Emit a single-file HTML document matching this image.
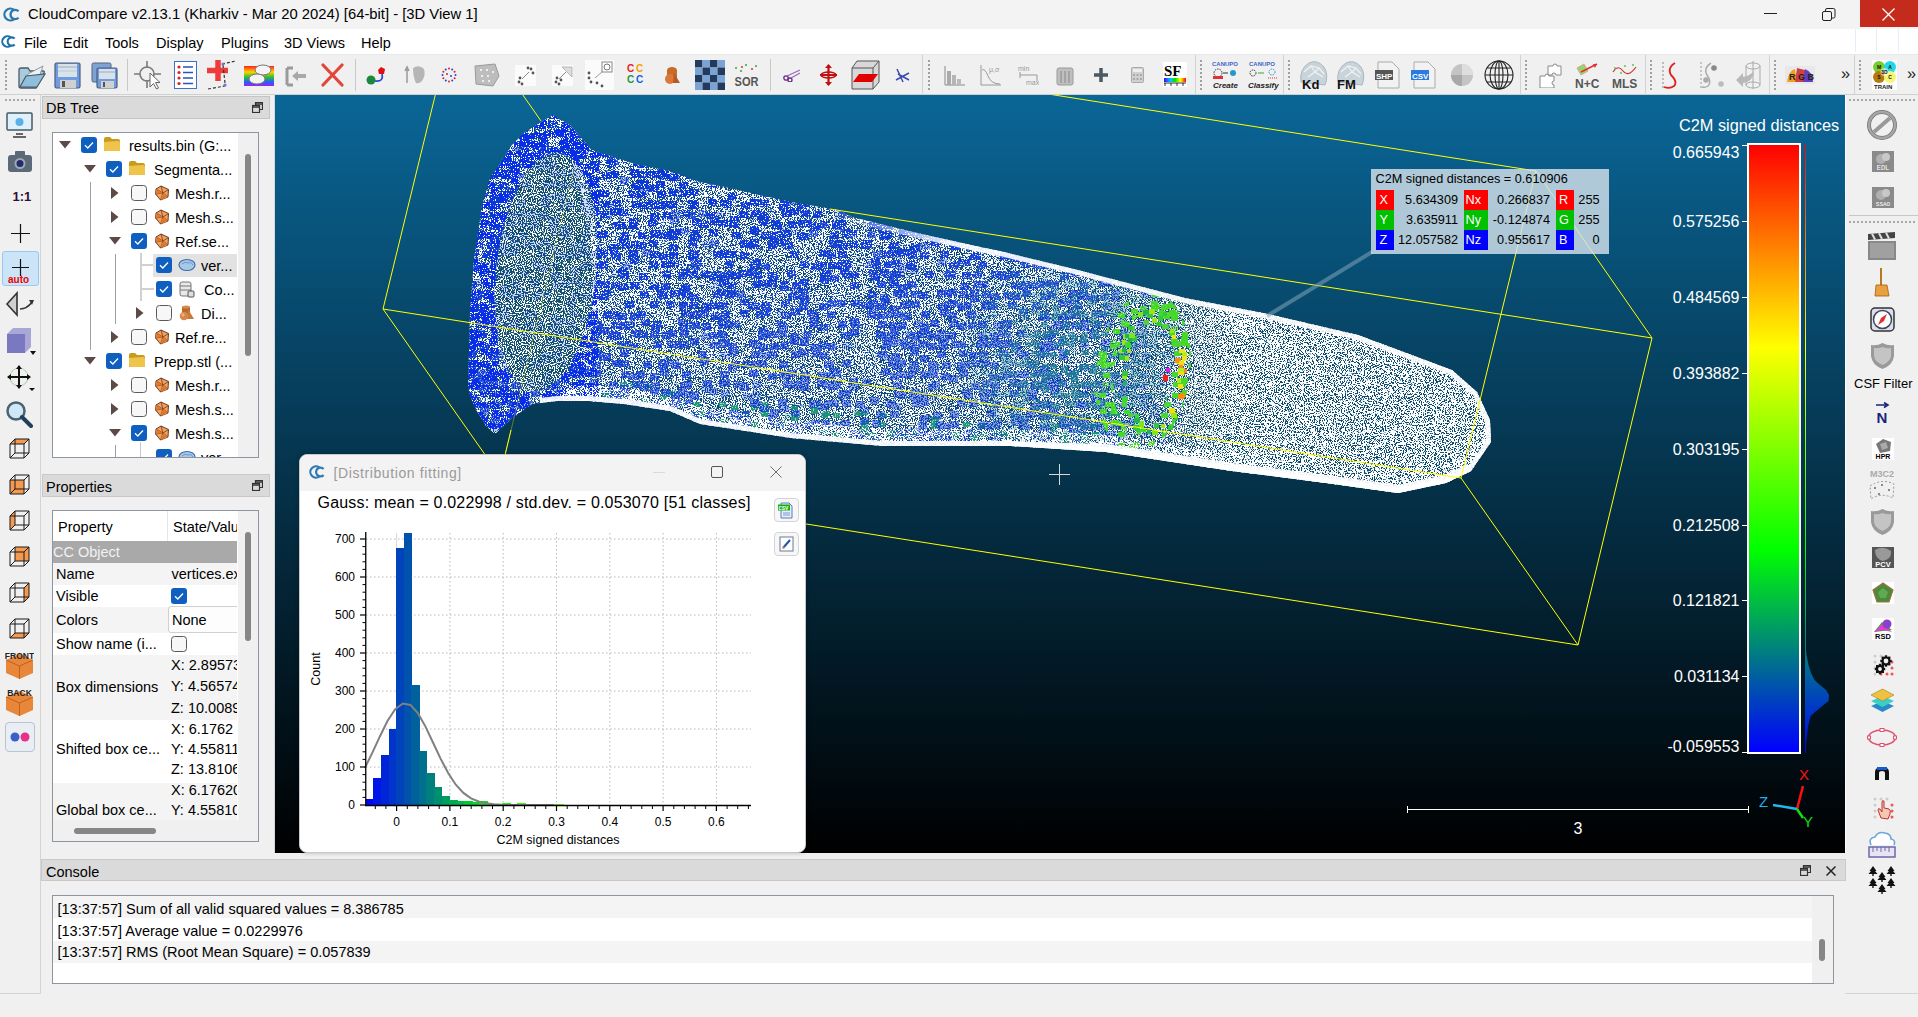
<!DOCTYPE html>
<html><head><meta charset="utf-8"><title>CloudCompare</title><style>*{box-sizing:border-box}
html,body{margin:0;padding:0}
body{width:1918px;height:1017px;overflow:hidden;position:relative;background:#f0f0f0;font-family:"Liberation Sans",sans-serif;color:#000}
.a{position:absolute;display:block}
.t{position:absolute;white-space:nowrap}
</style></head><body>
<div class="a" style="left:0px;top:0px;width:1918px;height:29px;background:#f3f3f3;"></div>
<svg class="a" style="left:3px;top:6px;" width="17" height="17" viewBox="0 0 16 16"><g fill="none" stroke="#2a78b0" stroke-width="2.2"><path d="M10.4 3.6 A5.6 5.6 0 1 0 10.4 12.4"/><path d="M14.6 4.9 A4.4 4.4 0 1 0 14.6 11.1"/></g></svg>
<div class="t" style="left:28px;top:6.36px;font-size:14.8px;line-height:17.02px;color:#000;">CloudCompare v2.13.1 (Kharkiv - Mar 20 2024) [64-bit] - [3D View 1]</div>
<div class="a" style="left:1764px;top:13px;width:13px;height:1px;background:#222;"></div>
<svg class="a" style="left:1822px;top:8px;" width="14" height="13" viewBox="0 0 14 13"><rect x="0.5" y="3.5" width="9" height="9" rx="1.5" fill="none" stroke="#222"/><path d="M3.5 3.5 V2 a1.5 1.5 0 0 1 1.5 -1.5 H11.5 a1.5 1.5 0 0 1 1.5 1.5 V8.5 a1.5 1.5 0 0 1 -1.5 1.5 H10" fill="none" stroke="#222"/></svg>
<div class="a" style="left:1860px;top:0px;width:58px;height:27px;background:#c42b1c;"></div>
<svg class="a" style="left:1882px;top:8px;" width="13" height="13" viewBox="0 0 13 13"><path d="M0.5 0.5 L12.5 12.5 M12.5 0.5 L0.5 12.5" stroke="#fff" stroke-width="1.3"/></svg>
<div class="a" style="left:0px;top:29px;width:1918px;height:25px;background:#ffffff;"></div>
<div class="a" style="left:1855px;top:29px;width:1px;height:23px;background:#e3eef8;"></div>
<div class="a" style="left:1876px;top:29px;width:1px;height:23px;background:#e3eef8;"></div>
<div class="a" style="left:1898px;top:29px;width:1px;height:23px;background:#e3eef8;"></div>
<svg class="a" style="left:1px;top:34px;" width="15" height="15" viewBox="0 0 16 16"><g fill="none" stroke="#1f6fa8" stroke-width="2.2"><path d="M10.4 3.6 A5.6 5.6 0 1 0 10.4 12.4"/><path d="M14.6 4.9 A4.4 4.4 0 1 0 14.6 11.1"/></g></svg>
<div class="t" style="left:24px;top:34.64px;font-size:14.5px;line-height:16.67px;color:#000;">File</div>
<div class="t" style="left:63px;top:34.64px;font-size:14.5px;line-height:16.67px;color:#000;">Edit</div>
<div class="t" style="left:105px;top:34.64px;font-size:14.5px;line-height:16.67px;color:#000;">Tools</div>
<div class="t" style="left:156px;top:34.64px;font-size:14.5px;line-height:16.67px;color:#000;">Display</div>
<div class="t" style="left:221px;top:34.64px;font-size:14.5px;line-height:16.67px;color:#000;">Plugins</div>
<div class="t" style="left:284px;top:34.64px;font-size:14.5px;line-height:16.67px;color:#000;">3D Views</div>
<div class="t" style="left:361px;top:34.64px;font-size:14.5px;line-height:16.67px;color:#000;">Help</div>
<div class="a" style="left:0px;top:54px;width:1918px;height:1px;background:#e8e8e8;"></div>
<div class="a" style="left:0px;top:55px;width:1918px;height:39px;background:#f0f0f0;"></div>
<div class="a" style="left:0px;top:94px;width:1918px;height:1px;background:#d0d0d0;"></div>
<div class="a" style="left:5px;top:60px;width:2px;height:2px;background:#a0a0a0;"></div>
<div class="a" style="left:5px;top:64px;width:2px;height:2px;background:#a0a0a0;"></div>
<div class="a" style="left:5px;top:68px;width:2px;height:2px;background:#a0a0a0;"></div>
<div class="a" style="left:5px;top:72px;width:2px;height:2px;background:#a0a0a0;"></div>
<div class="a" style="left:5px;top:76px;width:2px;height:2px;background:#a0a0a0;"></div>
<div class="a" style="left:5px;top:80px;width:2px;height:2px;background:#a0a0a0;"></div>
<div class="a" style="left:5px;top:84px;width:2px;height:2px;background:#a0a0a0;"></div>
<div class="a" style="left:5px;top:88px;width:2px;height:2px;background:#a0a0a0;"></div>
<div class="a" style="left:928px;top:60px;width:2px;height:2px;background:#a0a0a0;"></div>
<div class="a" style="left:928px;top:64px;width:2px;height:2px;background:#a0a0a0;"></div>
<div class="a" style="left:928px;top:68px;width:2px;height:2px;background:#a0a0a0;"></div>
<div class="a" style="left:928px;top:72px;width:2px;height:2px;background:#a0a0a0;"></div>
<div class="a" style="left:928px;top:76px;width:2px;height:2px;background:#a0a0a0;"></div>
<div class="a" style="left:928px;top:80px;width:2px;height:2px;background:#a0a0a0;"></div>
<div class="a" style="left:928px;top:84px;width:2px;height:2px;background:#a0a0a0;"></div>
<div class="a" style="left:928px;top:88px;width:2px;height:2px;background:#a0a0a0;"></div>
<div class="a" style="left:1200px;top:60px;width:2px;height:2px;background:#a0a0a0;"></div>
<div class="a" style="left:1200px;top:64px;width:2px;height:2px;background:#a0a0a0;"></div>
<div class="a" style="left:1200px;top:68px;width:2px;height:2px;background:#a0a0a0;"></div>
<div class="a" style="left:1200px;top:72px;width:2px;height:2px;background:#a0a0a0;"></div>
<div class="a" style="left:1200px;top:76px;width:2px;height:2px;background:#a0a0a0;"></div>
<div class="a" style="left:1200px;top:80px;width:2px;height:2px;background:#a0a0a0;"></div>
<div class="a" style="left:1200px;top:84px;width:2px;height:2px;background:#a0a0a0;"></div>
<div class="a" style="left:1200px;top:88px;width:2px;height:2px;background:#a0a0a0;"></div>
<div class="a" style="left:1288px;top:60px;width:2px;height:2px;background:#a0a0a0;"></div>
<div class="a" style="left:1288px;top:64px;width:2px;height:2px;background:#a0a0a0;"></div>
<div class="a" style="left:1288px;top:68px;width:2px;height:2px;background:#a0a0a0;"></div>
<div class="a" style="left:1288px;top:72px;width:2px;height:2px;background:#a0a0a0;"></div>
<div class="a" style="left:1288px;top:76px;width:2px;height:2px;background:#a0a0a0;"></div>
<div class="a" style="left:1288px;top:80px;width:2px;height:2px;background:#a0a0a0;"></div>
<div class="a" style="left:1288px;top:84px;width:2px;height:2px;background:#a0a0a0;"></div>
<div class="a" style="left:1288px;top:88px;width:2px;height:2px;background:#a0a0a0;"></div>
<div class="a" style="left:1525px;top:60px;width:2px;height:2px;background:#a0a0a0;"></div>
<div class="a" style="left:1525px;top:64px;width:2px;height:2px;background:#a0a0a0;"></div>
<div class="a" style="left:1525px;top:68px;width:2px;height:2px;background:#a0a0a0;"></div>
<div class="a" style="left:1525px;top:72px;width:2px;height:2px;background:#a0a0a0;"></div>
<div class="a" style="left:1525px;top:76px;width:2px;height:2px;background:#a0a0a0;"></div>
<div class="a" style="left:1525px;top:80px;width:2px;height:2px;background:#a0a0a0;"></div>
<div class="a" style="left:1525px;top:84px;width:2px;height:2px;background:#a0a0a0;"></div>
<div class="a" style="left:1525px;top:88px;width:2px;height:2px;background:#a0a0a0;"></div>
<div class="a" style="left:1650px;top:60px;width:2px;height:2px;background:#a0a0a0;"></div>
<div class="a" style="left:1650px;top:64px;width:2px;height:2px;background:#a0a0a0;"></div>
<div class="a" style="left:1650px;top:68px;width:2px;height:2px;background:#a0a0a0;"></div>
<div class="a" style="left:1650px;top:72px;width:2px;height:2px;background:#a0a0a0;"></div>
<div class="a" style="left:1650px;top:76px;width:2px;height:2px;background:#a0a0a0;"></div>
<div class="a" style="left:1650px;top:80px;width:2px;height:2px;background:#a0a0a0;"></div>
<div class="a" style="left:1650px;top:84px;width:2px;height:2px;background:#a0a0a0;"></div>
<div class="a" style="left:1650px;top:88px;width:2px;height:2px;background:#a0a0a0;"></div>
<div class="a" style="left:1774px;top:60px;width:2px;height:2px;background:#a0a0a0;"></div>
<div class="a" style="left:1774px;top:64px;width:2px;height:2px;background:#a0a0a0;"></div>
<div class="a" style="left:1774px;top:68px;width:2px;height:2px;background:#a0a0a0;"></div>
<div class="a" style="left:1774px;top:72px;width:2px;height:2px;background:#a0a0a0;"></div>
<div class="a" style="left:1774px;top:76px;width:2px;height:2px;background:#a0a0a0;"></div>
<div class="a" style="left:1774px;top:80px;width:2px;height:2px;background:#a0a0a0;"></div>
<div class="a" style="left:1774px;top:84px;width:2px;height:2px;background:#a0a0a0;"></div>
<div class="a" style="left:1774px;top:88px;width:2px;height:2px;background:#a0a0a0;"></div>
<div class="a" style="left:1859px;top:60px;width:2px;height:2px;background:#a0a0a0;"></div>
<div class="a" style="left:1859px;top:64px;width:2px;height:2px;background:#a0a0a0;"></div>
<div class="a" style="left:1859px;top:68px;width:2px;height:2px;background:#a0a0a0;"></div>
<div class="a" style="left:1859px;top:72px;width:2px;height:2px;background:#a0a0a0;"></div>
<div class="a" style="left:1859px;top:76px;width:2px;height:2px;background:#a0a0a0;"></div>
<div class="a" style="left:1859px;top:80px;width:2px;height:2px;background:#a0a0a0;"></div>
<div class="a" style="left:1859px;top:84px;width:2px;height:2px;background:#a0a0a0;"></div>
<div class="a" style="left:1859px;top:88px;width:2px;height:2px;background:#a0a0a0;"></div>
<div class="a" style="left:127px;top:59px;width:1px;height:32px;background:#c8c8c8;"></div>
<div class="a" style="left:355px;top:59px;width:1px;height:32px;background:#c8c8c8;"></div>
<div class="a" style="left:770px;top:59px;width:1px;height:32px;background:#c8c8c8;"></div>
<div class="a" style="left:922px;top:55px;width:1px;height:39px;background:#d2d2d2;"></div>
<div class="a" style="left:1195px;top:55px;width:1px;height:39px;background:#d2d2d2;"></div>
<div class="a" style="left:1283px;top:55px;width:1px;height:39px;background:#d2d2d2;"></div>
<div class="a" style="left:1520px;top:55px;width:1px;height:39px;background:#d2d2d2;"></div>
<div class="a" style="left:1645px;top:55px;width:1px;height:39px;background:#d2d2d2;"></div>
<div class="a" style="left:1769px;top:55px;width:1px;height:39px;background:#d2d2d2;"></div>
<div class="a" style="left:1854px;top:55px;width:1px;height:39px;background:#d2d2d2;"></div>
<svg class="a" style="left:16px;top:60px;" width="30" height="30" viewBox="0 0 30 30"><path d="M3 10 L3 26 Q3 28 5 28 L20 28 L28 13 Q29 11 27 11 L14 11 L12 8 L5 8 Q3 8 3 10Z" fill="#a9cbe0" stroke="#4a5a66" stroke-width="1.3"/><path d="M7 26 L12 14 L27 6 L22 20Z" fill="#eef2f4" stroke="#8a98a2"/><path d="M4 27 L10 16 L29 14 L21 27Z" fill="#8fbfdc" stroke="#4a5a66" stroke-width="1.2"/></svg>
<svg class="a" style="left:54px;top:62px;" width="27" height="27" viewBox="0 0 27 27"><rect x="1" y="1" width="25" height="25" rx="1.5" fill="#6f9be0" stroke="#4d5e78" stroke-width="1.2"/><rect x="4" y="2" width="19" height="13" fill="#d8e2ea"/><rect x="4" y="4" width="19" height="2" fill="#b9c8d6"/><rect x="4" y="8" width="19" height="2" fill="#c8d6e0"/><rect x="6" y="18" width="16" height="8" fill="#d0d0d0"/><rect x="8" y="19" width="3" height="6" fill="#555"/></svg>
<svg class="a" style="left:91px;top:62px;" width="27" height="27" viewBox="0 0 27 27"><rect x="1" y="1" width="19" height="19" rx="1.5" fill="#7fa2d6" stroke="#55667a"/><rect x="6" y="6" width="20" height="20" rx="1.5" fill="#6f9be0" stroke="#4d5e78" stroke-width="1.2"/><rect x="8" y="7" width="16" height="10" fill="#d8e2ea"/><rect x="8" y="9" width="16" height="2" fill="#b9c8d6"/><rect x="10" y="19" width="13" height="7" fill="#d0d0d0"/><rect x="12" y="20" width="2" height="5" fill="#555"/></svg>
<svg class="a" style="left:134px;top:60px;" width="29" height="30" viewBox="0 0 29 30"><g fill="none" stroke="#7a7a7a" stroke-width="1.6"><circle cx="13" cy="14" r="7"/><path d="M13 1 V8 M13 20 V28 M0 14 H6 M20 14 H27"/></g><path d="M16 13 L16 27 L19.5 23.5 L22.5 29 L24.5 28 L21.5 22.5 L26 22.5Z" fill="#fff" stroke="#666" stroke-width="1"/></svg>
<svg class="a" style="left:174px;top:61px;" width="23" height="28" viewBox="0 0 23 28"><rect x="0.5" y="0.5" width="22" height="27" fill="#fff" stroke="#3b73c9"/><g fill="#d22"><circle cx="5" cy="6" r="1.6"/><circle cx="5" cy="11.5" r="1.6"/><circle cx="5" cy="17" r="1.6"/><circle cx="5" cy="22.5" r="1.6"/></g><g stroke="#2255c0" stroke-width="1.6"><path d="M9 6 H19 M9 11.5 H19 M9 17 H19 M9 22.5 H19"/></g></svg>
<svg class="a" style="left:206px;top:59px;" width="32" height="31" viewBox="0 0 32 31"><path d="M1 11.5 H22 M12 1 V22" stroke="#ee3b3b" stroke-width="5.5"/><path d="M16 5 L30 2 M17 6 L19 24 M2 30 L19 27" stroke="#333" stroke-width="1.2" stroke-dasharray="3 2"/><circle cx="17" cy="5" r="1.6" fill="#77c"/><circle cx="19" cy="26" r="1.6" fill="#77c"/></svg>
<svg class="a" style="left:244px;top:60px;" width="30" height="29" viewBox="0 0 30 29"><defs><linearGradient id="rb" x1="0" y1="0" x2="0" y2="1"><stop offset="0" stop-color="#ff2020"/><stop offset=".3" stop-color="#ffd400"/><stop offset=".55" stop-color="#30c030"/><stop offset=".8" stop-color="#2060ff"/><stop offset="1" stop-color="#a020f0"/></linearGradient></defs><rect x="0" y="6" width="30" height="20" fill="url(#rb)"/><ellipse cx="19" cy="10" rx="8" ry="5" fill="#f4f4f4" stroke="#777"/><ellipse cx="13" cy="19" rx="8" ry="5" fill="#f4f4f4" stroke="#777"/></svg>
<svg class="a" style="left:285px;top:66px;" width="23" height="21" viewBox="0 0 23 21"><path d="M2 2 H8 M2 2 V19 M2 19 H8" stroke="#9a9a9a" stroke-width="3" fill="none"/><path d="M7 10 L13 5 V8 H21 V12 H13 V15Z" fill="#a8a8a8"/></svg>
<svg class="a" style="left:321px;top:63px;" width="23" height="24" viewBox="0 0 23 24"><path d="M2 2 L21 22 M21 2 L2 22" stroke="#e2463a" stroke-width="3.2" stroke-linecap="round"/></svg>
<svg class="a" style="left:366px;top:64px;" width="21" height="22" viewBox="0 0 21 22"><circle cx="5" cy="16" r="4.5" fill="#1a8a3a"/><path d="M15 3 l4 2 -1 5 -5 0 -1-4z" fill="#e01010"/><path d="M16 10 Q18 18 9 17" stroke="#2244dd" stroke-width="1.6" fill="none"/></svg>
<svg class="a" style="left:404px;top:63px;" width="22" height="23" viewBox="0 0 22 23"><path d="M3 20 V6 M1 8 L3 4 L5 8" stroke="#999" stroke-width="1.5" fill="none"/><path d="M9 5 q6-4 11 1 q2 6-2 12 q-3 3-6 2 q-3-6-3-15z" fill="#b5b5b5"/></svg>
<svg class="a" style="left:441px;top:67px;" width="16" height="16" viewBox="0 0 16 16"><circle cx="14.5" cy="8.0" r="1" fill="#2040e0"/><circle cx="13.6" cy="11.2" r="1" fill="#e02020"/><circle cx="11.2" cy="13.6" r="1" fill="#2040e0"/><circle cx="8.0" cy="14.5" r="1" fill="#e02020"/><circle cx="4.8" cy="13.6" r="1" fill="#2040e0"/><circle cx="2.4" cy="11.2" r="1" fill="#e02020"/><circle cx="1.5" cy="8.0" r="1" fill="#2040e0"/><circle cx="2.4" cy="4.8" r="1" fill="#e02020"/><circle cx="4.7" cy="2.4" r="1" fill="#2040e0"/><circle cx="8.0" cy="1.5" r="1" fill="#e02020"/><circle cx="11.2" cy="2.4" r="1" fill="#2040e0"/><circle cx="13.6" cy="4.7" r="1" fill="#e02020"/><circle cx="6" cy="7" r="1" fill="#e02020"/><circle cx="10" cy="9" r="1" fill="#2040e0"/></svg>
<svg class="a" style="left:473px;top:62px;" width="27" height="26" viewBox="0 0 27 26"><path d="M2 4 L22 2 L26 14 L20 24 L3 22Z" fill="#bdbdbd" stroke="#9a9a9a"/><g fill="#fff"><circle cx="8" cy="8" r="1"/><circle cx="14" cy="8" r="1"/><circle cx="20" cy="10" r="1"/><circle cx="9" cy="14" r="1"/><circle cx="15" cy="14" r="1"/><circle cx="10" cy="19" r="1"/><circle cx="16" cy="19" r="1"/></g></svg>
<svg class="a" style="left:515px;top:65px;" width="21" height="21" viewBox="0 0 21 21"><rect width="21" height="21" fill="#fbfbfb"/><circle cx="4" cy="17" r="1.4" fill="#555"/><circle cx="7" cy="19" r="1.4" fill="#555"/><circle cx="5" cy="13" r="1.4" fill="#555"/><circle cx="16" cy="4" r="1.4" fill="#555"/><circle cx="18" cy="8" r="1.4" fill="#555"/><circle cx="13" cy="3" r="1.4" fill="#555"/><path d="M7 14 L14 7" stroke="#888" stroke-width="1"/></svg>
<svg class="a" style="left:552px;top:65px;" width="21" height="21" viewBox="0 0 21 21"><rect width="21" height="21" fill="#fbfbfb"/><circle cx="4" cy="17" r="1.4" fill="#555"/><circle cx="7" cy="19" r="1.4" fill="#555"/><circle cx="5" cy="13" r="1.4" fill="#555"/><circle cx="9" cy="15" r="1.4" fill="#555"/><path d="M10 2 L20 2 L20 12Z" fill="#ddd" stroke="#999" stroke-width=".6"/><path d="M7 14 L14 7" stroke="#888"/></svg>
<svg class="a" style="left:585px;top:60px;" width="29" height="30" viewBox="0 0 29 30"><rect width="29" height="30" fill="#fbfbfb"/><circle cx="4" cy="13" r="1.4" fill="#555"/><circle cx="6" cy="22" r="1.4" fill="#555"/><circle cx="12" cy="23" r="1.4" fill="#555"/><circle cx="17" cy="26" r="1.4" fill="#555"/><circle cx="4" cy="18" r="1.4" fill="#555"/><rect x="17" y="2" width="10" height="10" fill="#fff" stroke="#888"/><circle cx="22" cy="7" r="3" fill="none" stroke="#777"/><path d="M10 18 L18 11" stroke="#999"/></svg>
<svg class="a" style="left:627px;top:63px;" width="18" height="22" viewBox="0 0 18 22"><g font-family="Liberation Sans" font-weight="bold" font-size="10"><text x="0" y="9" fill="#e52020">C</text><text x="9" y="9" fill="#f5a000">C</text><text x="0" y="20" fill="#1a9a3a">C</text><text x="9" y="20" fill="#2060e0">C</text></g></svg>
<svg class="a" style="left:664px;top:65px;" width="17" height="19" viewBox="0 0 17 19"><ellipse cx="8" cy="5" rx="5" ry="3" fill="#c86a28"/><rect x="3" y="5" width="10" height="8" fill="#c86a28"/><circle cx="6" cy="14" r="5" fill="#d9783a"/><path d="M10 8 L16 18 H9Z" fill="#b55a20"/></svg>
<svg class="a" style="left:695px;top:60px;" width="30" height="30" viewBox="0 0 30 30"><rect x="0.0" y="0.0" width="7.5" height="7.5" fill="#223a5c"/><rect x="0.0" y="7.5" width="7.5" height="7.5" fill="#7aa4d4"/><rect x="0.0" y="15.0" width="7.5" height="7.5" fill="#223a5c"/><rect x="0.0" y="22.5" width="7.5" height="7.5" fill="#7aa4d4"/><rect x="7.5" y="0.0" width="7.5" height="7.5" fill="#7aa4d4"/><rect x="7.5" y="7.5" width="7.5" height="7.5" fill="#223a5c"/><rect x="7.5" y="15.0" width="7.5" height="7.5" fill="#7aa4d4"/><rect x="7.5" y="22.5" width="7.5" height="7.5" fill="#223a5c"/><rect x="15.0" y="0.0" width="7.5" height="7.5" fill="#223a5c"/><rect x="15.0" y="7.5" width="7.5" height="7.5" fill="#7aa4d4"/><rect x="15.0" y="15.0" width="7.5" height="7.5" fill="#223a5c"/><rect x="15.0" y="22.5" width="7.5" height="7.5" fill="#7aa4d4"/><rect x="22.5" y="0.0" width="7.5" height="7.5" fill="#7aa4d4"/><rect x="22.5" y="7.5" width="7.5" height="7.5" fill="#223a5c"/><rect x="22.5" y="15.0" width="7.5" height="7.5" fill="#7aa4d4"/><rect x="22.5" y="22.5" width="7.5" height="7.5" fill="#223a5c"/></svg>
<svg class="a" style="left:734px;top:62px;" width="26" height="26" viewBox="0 0 26 26"><text x="0.5" y="24" font-family="Liberation Sans" font-weight="bold" font-size="13" fill="#555" textLength="24" lengthAdjust="spacingAndGlyphs">SOR</text><g fill="#3a3"><circle cx="2" cy="6" r="1"/><circle cx="12" cy="3" r="1"/><circle cx="22" cy="4" r="1"/><circle cx="7" cy="9" r="1"/></g><g fill="#d33"><circle cx="8" cy="5" r="1"/><circle cx="18" cy="7" r="1"/></g></svg>
<svg class="a" style="left:783px;top:68px;" width="18" height="14" viewBox="0 0 18 14"><circle cx="3" cy="10" r="2.2" fill="none" stroke="#6a2a8a" stroke-width="1.3"/><circle cx="7" cy="12" r="2" fill="none" stroke="#6a2a8a" stroke-width="1.3"/><path d="M4 8 L17 2 M8 10 L17 5" stroke="#9a6aba" stroke-width="1.2"/></svg>
<svg class="a" style="left:819px;top:64px;" width="19" height="22" viewBox="0 0 19 22"><path d="M9.5 1 V21 M1 11 H18" stroke="#c01010" stroke-width="2.2"/><ellipse cx="9.5" cy="11" rx="7.5" ry="3" fill="none" stroke="#c01010" stroke-width="1.6"/><path d="M6 4 L9.5 0 L13 4 M6 18 L9.5 22 L13 18" fill="#c01010"/></svg>
<svg class="a" style="left:851px;top:60px;" width="29" height="30" viewBox="0 0 29 30"><path d="M6 1 H28 V22 L22 29 H1 V8Z" fill="#d8d8d8" stroke="#555" stroke-width="1"/><path d="M1 8 H22 L28 1 M22 8 V29" stroke="#555" fill="none"/><path d="M2 22 L8 14 H27 L21 22Z" fill="#e00000"/></svg>
<svg class="a" style="left:895px;top:67px;" width="16" height="16" viewBox="0 0 16 16"><path d="M2 2 L8 15 M1 13 L14 6 M3 7 L14 13" stroke="#3a4ab0" stroke-width="1.5"/></svg>
<svg class="a" style="left:944px;top:66px;" width="21" height="20" viewBox="0 0 21 20"><path d="M1 0 V19 H21" stroke="#888" fill="none"/><rect x="3" y="5" width="4" height="14" fill="#aaa"/><rect x="8" y="9" width="4" height="10" fill="#b5b5b5"/><rect x="13" y="13" width="4" height="6" fill="#bbb"/></svg>
<svg class="a" style="left:980px;top:64px;" width="21" height="22" viewBox="0 0 21 22"><path d="M1 1 V21 H21" stroke="#999" fill="none"/><path d="M2 6 Q5 4 8 12 T20 20" stroke="#999" fill="none"/><text x="9" y="8" font-size="7" fill="#999" font-family="Liberation Sans">μ,σ</text></svg>
<svg class="a" style="left:1018px;top:64px;" width="21" height="22" viewBox="0 0 21 22"><text x="0" y="7" font-size="7" fill="#999" font-family="Liberation Sans">min</text><text x="8" y="21" font-size="7" fill="#999" font-family="Liberation Sans">max</text><path d="M2 8 V14 M2 11 H19 M19 11 V17" stroke="#999"/></svg>
<svg class="a" style="left:1055px;top:66px;" width="20" height="20" viewBox="0 0 20 20"><rect x="2" y="2" width="16" height="17" rx="2" fill="#bfbfbf" stroke="#9a9a9a"/><path d="M6 5 V17 M10 5 V17 M14 5 V17" stroke="#888"/></svg>
<svg class="a" style="left:1093px;top:67px;" width="16" height="16" viewBox="0 0 16 16"><path d="M8 1 V15 M1 8 H15" stroke="#4a5963" stroke-width="3.5"/></svg>
<svg class="a" style="left:1131px;top:67px;" width="13" height="16" viewBox="0 0 13 16"><rect x="0.5" y="0.5" width="12" height="15" rx="1" fill="#d0d0d0" stroke="#aaa"/><rect x="2" y="2" width="9" height="3" fill="#eee"/><g fill="#aaa"><rect x="2" y="7" width="2" height="2"/><rect x="5.5" y="7" width="2" height="2"/><rect x="9" y="7" width="2" height="2"/><rect x="2" y="11" width="2" height="2"/><rect x="5.5" y="11" width="2" height="2"/><rect x="9" y="11" width="2" height="2"/></g></svg>
<svg class="a" style="left:1163px;top:62px;" width="24" height="25" viewBox="0 0 24 25"><rect width="24" height="25" fill="#fff"/><text x="1" y="14" font-family="Liberation Serif" font-weight="bold" font-size="15" fill="#000">SF</text><defs><linearGradient id="sfg"><stop offset="0" stop-color="#40f"/><stop offset=".3" stop-color="#0cf"/><stop offset=".5" stop-color="#0d0"/><stop offset=".75" stop-color="#ff0"/><stop offset="1" stop-color="#f00"/></linearGradient></defs><rect x="1" y="16" width="22" height="4" fill="url(#sfg)"/><path d="M1 21 H23 M2 21 V24 M8 21 V24 M14 21 V24 M20 21 V24" stroke="#000" stroke-width=".8"/></svg>
<svg class="a" style="left:1211px;top:60px;" width="30" height="30" viewBox="0 0 30 30"><text x="1" y="6" font-size="6" font-weight="bold" fill="#3a66c8" font-family="Liberation Sans">CANUPO</text><circle cx="7" cy="13" r="4" fill="none" stroke="#333" stroke-dasharray="1.5 1"/><path d="M12 13 H17" stroke="#333"/><circle cx="22" cy="13" r="3" fill="#29c"/><rect x="2" y="16" width="10" height="3" fill="#d33"/><text x="2" y="28" font-size="8" font-style="italic" font-weight="bold" fill="#222" font-family="Liberation Sans">Create</text></svg>
<svg class="a" style="left:1248px;top:60px;" width="31" height="30" viewBox="0 0 31 30"><text x="1" y="6" font-size="6" font-weight="bold" fill="#3a66c8" font-family="Liberation Sans">CANUPO</text><circle cx="5" cy="13" r="3" fill="none" stroke="#333" stroke-dasharray="1.5 1"/><path d="M10 13 H16" stroke="#3a3"/><circle cx="24" cy="12" r="3" fill="none" stroke="#29c" stroke-dasharray="1.5 1"/><path d="M20 18 H29" stroke="#d33" stroke-dasharray="1 1"/><text x="0" y="28" font-size="8" font-style="italic" font-weight="bold" fill="#222" font-family="Liberation Sans">Classify</text></svg>
<svg class="a" style="left:1298px;top:60px;" width="30" height="30" viewBox="0 0 30 30"><path d="M3 22 Q1 9 11 3 Q19 -1 26 7 Q31 15 27 25 Z" fill="#c9d4da" stroke="#aab8c0"/><path d="M6 12 L13 6 L21 8 L26 14 M10 17 L17 12 L25 17 M13 6 L17 12 M21 8 L17 12" stroke="#eef3f6" stroke-width="1.2" fill="none"/><text x="4" y="29" font-size="13" font-weight="bold" fill="#111" font-family="Liberation Sans">Kd</text></svg>
<svg class="a" style="left:1335px;top:60px;" width="30" height="30" viewBox="0 0 30 30"><path d="M3 22 Q1 9 11 3 Q19 -1 26 7 Q31 15 27 25 Z" fill="#c9d4da" stroke="#aab8c0"/><path d="M6 12 L13 6 L21 8 L26 14 M10 17 L17 12 L25 17 M13 6 L17 12 M21 8 L17 12" stroke="#eef3f6" stroke-width="1.2" fill="none"/><text x="2" y="29" font-size="13" font-weight="bold" fill="#111" font-family="Liberation Sans">FM</text></svg>
<svg class="a" style="left:1374px;top:61px;" width="27" height="28" viewBox="0 0 27 28"><path d="M4 1 H18 L25 8 V27 H4Z" fill="#f2f2f2" stroke="#aaa"/><rect x="1" y="9" width="18" height="10" fill="#555"/><text x="2" y="17.5" font-size="8" fill="#fff" font-family="Liberation Sans" font-weight="bold">SHP</text></svg>
<svg class="a" style="left:1410px;top:61px;" width="27" height="28" viewBox="0 0 27 28"><path d="M4 1 H18 L25 8 V27 H4Z" fill="#f2f2f2" stroke="#aaa"/><rect x="1" y="9" width="18" height="10" fill="#2a7ae0"/><text x="2" y="17.5" font-size="8" fill="#fff" font-family="Liberation Sans" font-weight="bold">CSV</text></svg>
<svg class="a" style="left:1450px;top:63px;" width="24" height="24" viewBox="0 0 24 24"><circle cx="12" cy="12" r="11" fill="#c4c4c4"/><path d="M12 12 L12 1 A11 11 0 0 1 23 12Z" fill="#dedede"/><path d="M12 12 L1 12 A11 11 0 0 0 12 23Z" fill="#a8a8a8"/></svg>
<svg class="a" style="left:1484px;top:60px;" width="30" height="30" viewBox="0 0 30 30"><g fill="none" stroke="#222" stroke-width="1.1"><circle cx="15" cy="15" r="14"/><ellipse cx="15" cy="15" rx="9" ry="14"/><ellipse cx="15" cy="15" rx="4" ry="14"/><path d="M1 15 H29 M3 8 H27 M3 22 H27 M15 1 V29"/></g></svg>
<svg class="a" style="left:1538px;top:62px;" width="24" height="26" viewBox="0 0 24 26"><path d="M2 14 h5 a2 2 0 1 1 4 0 h5 v5 a2 2 0 1 0 0 4 v3 h-14z M10 4 h5 a2 2 0 1 1 4 0 h4 v9 h-5 a2 2 0 1 0 -4 0 h-4z" fill="#fff" stroke="#888" stroke-width="1"/></svg>
<svg class="a" style="left:1575px;top:62px;" width="25" height="27" viewBox="0 0 25 27"><path d="M2 6 L9 2 L13 9 L6 13Z" fill="#8fd86a" stroke="#e0a0a0"/><path d="M6 10 L22 2" stroke="#e03030" stroke-width="1.5"/><path d="M22 2 L18 2 L20 6Z" fill="#e03030"/><text x="0" y="26" font-size="12" font-weight="bold" fill="#555" font-family="Liberation Sans">N+C</text></svg>
<svg class="a" style="left:1612px;top:62px;" width="26" height="27" viewBox="0 0 26 27"><path d="M1 10 Q6 2 11 9 T24 5" stroke="#d03030" fill="none" stroke-width="1.2"/><g fill="#5c5"><circle cx="3" cy="6" r="1"/><circle cx="13" cy="4" r="1"/><circle cx="21" cy="3" r="1"/><circle cx="9" cy="11" r="1"/></g><text x="0" y="26" font-size="12" font-weight="bold" fill="#555" font-family="Liberation Sans">MLS</text></svg>
<svg class="a" style="left:1661px;top:60px;" width="20" height="30" viewBox="0 0 20 30"><path d="M2 2 V28" stroke="#888" stroke-dasharray="2 2"/><path d="M14 3 Q6 8 10 15 Q17 22 13 26 Q9 29 3 27" stroke="#e02020" stroke-width="1.8" fill="none"/></svg>
<svg class="a" style="left:1699px;top:60px;" width="27" height="30" viewBox="0 0 27 30"><path d="M2 2 V28" stroke="#999" stroke-dasharray="2 2"/><path d="M12 3 Q4 8 8 15 Q13 22 9 26 Q6 28 3 27" stroke="#aaa" stroke-width="1.5" fill="none"/><circle cx="15" cy="8" r="2.8" fill="#888"/><circle cx="7" cy="20" r="2.8" fill="#aaa"/><circle cx="22" cy="24" r="2.8" fill="#bbb"/></svg>
<svg class="a" style="left:1735px;top:60px;" width="27" height="30" viewBox="0 0 27 30"><ellipse cx="18" cy="6" rx="7" ry="3" fill="none" stroke="#aaa"/><path d="M11 6 V25 M25 6 V25 M18 1 V29" stroke="#aaa" fill="none"/><ellipse cx="18" cy="25" rx="7" ry="3" fill="none" stroke="#aaa"/><path d="M1 20 L8 13 V17 Q15 16 19 11 Q18 22 8 23 V27Z" fill="#b8b8b8"/></svg>
<svg class="a" style="left:1785px;top:66px;" width="30" height="18" viewBox="0 0 30 18"><rect x="0" y="0" width="30" height="18" fill="#e8e8e8"/><path d="M2 16 Q4 4 10 3 L12 16Z" fill="#f0a020"/><path d="M10 16 L12 2 L20 4 L20 16Z" fill="#d04040"/><path d="M18 16 L20 3 Q28 6 28 16Z" fill="#6040c0"/><text x="4" y="14" font-size="9" font-weight="bold" fill="#222" font-family="Liberation Sans">R G B</text></svg>
<div class="t" style="left:1841px;top:65.26px;font-size:16px;line-height:18.4px;color:#000;letter-spacing:-1.5px;color:#222">&#8250;&#8250;</div>
<svg class="a" style="left:1872px;top:60px;" width="25" height="30" viewBox="0 0 25 30"><rect width="25" height="30" fill="#fff"/><circle cx="7" cy="7" r="6" fill="#7ccc2c"/><circle cx="18" cy="7" r="6" fill="#22d8e8"/><circle cx="7" cy="17" r="6" fill="#b87a10"/><circle cx="18" cy="17" r="6" fill="#f6f670"/><circle cx="12.5" cy="12" r="4" fill="#fff" opacity="0.5"/><g font-size="5" font-weight="bold" fill="#111" font-family="Liberation Sans" text-anchor="middle"><text x="7" y="9">M</text><text x="18" y="9">A</text><text x="7" y="19">S</text><text x="18" y="19">C</text><text x="12.5" y="14">3D</text></g><text x="2" y="29" font-size="6" font-weight="bold" fill="#222" font-family="Liberation Sans">TRAIN</text></svg>
<div class="t" style="left:1907px;top:65.26px;font-size:16px;line-height:18.4px;color:#000;letter-spacing:-1.5px;color:#222">&#8250;&#8250;</div>
<div class="a" style="left:40px;top:95px;width:1px;height:899px;background:#d4d4d4;"></div>
<div class="a" style="left:0px;top:993px;width:41px;height:1px;background:#d4d4d4;"></div>
<div class="a" style="left:5px;top:99px;width:2px;height:2px;background:#a8a8a8;"></div>
<div class="a" style="left:9px;top:99px;width:2px;height:2px;background:#a8a8a8;"></div>
<div class="a" style="left:13px;top:99px;width:2px;height:2px;background:#a8a8a8;"></div>
<div class="a" style="left:17px;top:99px;width:2px;height:2px;background:#a8a8a8;"></div>
<div class="a" style="left:21px;top:99px;width:2px;height:2px;background:#a8a8a8;"></div>
<div class="a" style="left:25px;top:99px;width:2px;height:2px;background:#a8a8a8;"></div>
<div class="a" style="left:29px;top:99px;width:2px;height:2px;background:#a8a8a8;"></div>
<div class="a" style="left:33px;top:99px;width:2px;height:2px;background:#a8a8a8;"></div>
<svg class="a" style="left:6px;top:112px;" width="27" height="26" viewBox="0 0 27 26"><rect x="1" y="1" width="25" height="17" rx="1" fill="#dff0fb" stroke="#455a64" stroke-width="1.5"/><circle cx="13.5" cy="10" r="4" fill="#5ab0e8"/><path d="M10 22 H17 M7 25 H20" stroke="#666" stroke-width="2"/></svg>
<svg class="a" style="left:7px;top:150px;" width="26" height="23" viewBox="0 0 26 23"><rect x="1" y="5" width="24" height="17" rx="3" fill="#5c6a78"/><rect x="8" y="1" width="10" height="5" rx="1" fill="#5c6a78"/><circle cx="13" cy="13.5" r="5.5" fill="#9ab"/><circle cx="13" cy="13.5" r="3.5" fill="#2a2a6a"/></svg>
<div class="t" style="left:12.5px;top:190.02px;font-size:13px;line-height:14.95px;color:#000;font-weight:bold;color:#301030;font-family:"Liberation Serif",serif">1:1</div>
<svg class="a" style="left:11px;top:224px;" width="19" height="19" viewBox="0 0 19 19"><path d="M9.5 0 V19 M0 9.5 H19" stroke="#111" stroke-width="1.2"/></svg>
<div class="a" style="left:2px;top:251px;width:37px;height:35px;background:#cce4f7;border:1px solid #99c9ef;border-radius:3px"></div>
<svg class="a" style="left:11px;top:258px;" width="19" height="19" viewBox="0 0 19 19"><path d="M9.5 1 V18 M1 9.5 H18" stroke="#111" stroke-width="1.2"/></svg>
<div class="t" style="left:8px;top:273.78px;font-size:10px;line-height:11.5px;color:#e00;font-weight:bold">auto</div>
<svg class="a" style="left:5px;top:291px;" width="31" height="26" viewBox="0 0 31 26"><path d="M2 13 L12 2 V24Z" fill="#d0d0d0" stroke="#333" stroke-width="1.6"/><path d="M15 18 Q22 18 27 11" stroke="#333" stroke-width="1.5" fill="none"/><path d="M24 9 L29 9 L27 14Z" fill="#333"/></svg>
<svg class="a" style="left:6px;top:327px;" width="30" height="29" viewBox="0 0 30 29"><path d="M1 7 L7 1 H25 V20 L19 26 H1Z" fill="#a9a7d6"/><rect x="1" y="7" width="18" height="19" fill="#7a78c0"/><path d="M24 24 L30 24 L27 28Z" fill="#111"/></svg>
<svg class="a" style="left:7px;top:365px;" width="29" height="26" viewBox="0 0 29 26"><circle cx="12" cy="12" r="9" fill="none" stroke="#b8d8b8" stroke-width="1.2"/><path d="M12 1 V23 M1 12 H23" stroke="#111" stroke-width="2"/><path d="M9 4 L12 0 L15 4 M9 20 L12 24 L15 20 M4 9 L0 12 L4 15 M20 9 L24 12 L20 15" fill="#111"/><path d="M22 23 L28 23 L25 26Z" fill="#111"/></svg>
<svg class="a" style="left:5px;top:400px;" width="29" height="28" viewBox="0 0 29 28"><circle cx="11" cy="11" r="8.5" fill="#cfe8f8" stroke="#4a6272" stroke-width="2.5"/><path d="M17 17 L26 26" stroke="#1f3f5a" stroke-width="4" stroke-linecap="round"/></svg>
<svg class="a" style="left:9px;top:438px;" width="22" height="22" viewBox="0 0 22 22"><path d="M1 6 L6 1 H20 L15 6Z" fill="#f39a50"/><g fill="none" stroke="#1a1a1a" stroke-width="1"><path d="M1 6 H15 V20 H1Z M6 1 H20 V15 H6Z M1 6 L6 1 M15 6 L20 1 M15 20 L20 15 M1 20 L6 15"/></g></svg>
<svg class="a" style="left:9px;top:474px;" width="22" height="22" viewBox="0 0 22 22"><path d="M1 6 H15 V20 H1Z" fill="#f39a50"/><g fill="none" stroke="#1a1a1a" stroke-width="1"><path d="M1 6 H15 V20 H1Z M6 1 H20 V15 H6Z M1 6 L6 1 M15 6 L20 1 M15 20 L20 15 M1 20 L6 15"/></g></svg>
<svg class="a" style="left:9px;top:510px;" width="22" height="22" viewBox="0 0 22 22"><path d="M1 6 L6 1 V15 L1 20Z" fill="#f39a50"/><g fill="none" stroke="#1a1a1a" stroke-width="1"><path d="M1 6 H15 V20 H1Z M6 1 H20 V15 H6Z M1 6 L6 1 M15 6 L20 1 M15 20 L20 15 M1 20 L6 15"/></g></svg>
<svg class="a" style="left:9px;top:546px;" width="22" height="22" viewBox="0 0 22 22"><path d="M6 1 H20 V15 H6Z" fill="#f39a50"/><g fill="none" stroke="#1a1a1a" stroke-width="1"><path d="M1 6 H15 V20 H1Z M6 1 H20 V15 H6Z M1 6 L6 1 M15 6 L20 1 M15 20 L20 15 M1 20 L6 15"/></g></svg>
<svg class="a" style="left:9px;top:582px;" width="22" height="22" viewBox="0 0 22 22"><path d="M15 6 L20 1 V15 L15 20Z" fill="#f39a50"/><g fill="none" stroke="#1a1a1a" stroke-width="1"><path d="M1 6 H15 V20 H1Z M6 1 H20 V15 H6Z M1 6 L6 1 M15 6 L20 1 M15 20 L20 15 M1 20 L6 15"/></g></svg>
<svg class="a" style="left:9px;top:618px;" width="22" height="22" viewBox="0 0 22 22"><path d="M1 20 L6 15 H20 L15 20Z" fill="#f39a50"/><g fill="none" stroke="#1a1a1a" stroke-width="1"><path d="M1 6 H15 V20 H1Z M6 1 H20 V15 H6Z M1 6 L6 1 M15 6 L20 1 M15 20 L20 15 M1 20 L6 15"/></g></svg>
<svg class="a" style="left:5px;top:650px;" width="29" height="29" viewBox="0 0 29 29"><path d="M14.5 4 L28 10 V23 L14.5 29 L1 23 V10Z" fill="#e8873a"/><path d="M1 10 L14.5 16 L28 10 M14.5 16 V29" stroke="#c06020" fill="none"/><text x="14.5" y="9" text-anchor="middle" font-size="8.5" font-weight="bold" fill="#222" font-family="Liberation Sans">FRONT</text></svg>
<svg class="a" style="left:5px;top:687px;" width="29" height="29" viewBox="0 0 29 29"><path d="M14.5 4 L28 10 V23 L14.5 29 L1 23 V10Z" fill="#e8873a"/><path d="M1 10 L14.5 16 L28 10 M14.5 16 V29" stroke="#c06020" fill="none"/><text x="14.5" y="9" text-anchor="middle" font-size="8.5" font-weight="bold" fill="#222" font-family="Liberation Sans">BACK</text></svg>
<div class="a" style="left:5px;top:722px;width:30px;height:30px;background:#e8eef4;border:1px solid #b8c4d0;border-radius:4px"></div>
<svg class="a" style="left:9px;top:731px;" width="22" height="12" viewBox="0 0 22 12"><circle cx="6" cy="6" r="4.5" fill="#3a5fc8"/><circle cx="16" cy="6" r="4.5" fill="#e8308a"/></svg>
<div class="a" style="left:41px;top:95px;width:234px;height:764px;background:#f0f0f0;"></div>
<div class="a" style="left:274px;top:95px;width:1px;height:758px;background:#d8d8d8;"></div>
<div class="a" style="left:42px;top:96px;width:228px;height:23px;background:#dadada;border:1px solid #c4c4c4"></div>
<div class="t" style="left:46px;top:100.14px;font-size:14.5px;line-height:16.67px;color:#000;">DB Tree</div>
<svg class="a" style="left:252px;top:102px;" width="11" height="11" viewBox="0 0 11 11"><rect x="0.5" y="3.5" width="7" height="7" fill="none" stroke="#333" stroke-width="1.2"/><path d="M3.5 3.5 V0.5 H10.5 V7.5 H7.5" fill="none" stroke="#333" stroke-width="1.2"/><path d="M0.5 5 H7.5 M3.5 2 H10.5" stroke="#333" stroke-width="1.5"/></svg>
<div class="a" style="left:52px;top:132px;width:207px;height:326px;background:#fff;border:1px solid #8d96a0"></div>
<div class="a" style="left:238px;top:133px;width:20px;height:324px;background:#f0f0f0;"></div>
<div class="a" style="left:245px;top:154px;width:6px;height:202px;background:#868686;border-radius:3px"></div>
<div class="a" style="left:53px;top:133px;width:185px;height:324px;overflow:hidden"><div class="a" style="left:37px;top:49px;width:1px;height:168px;background:#a0a0a0;"></div>
<div class="a" style="left:62px;top:121px;width:1px;height:70px;background:#a0a0a0;"></div>
<div class="a" style="left:87px;top:120px;width:2px;height:48px;background:#d4d0d0;"></div>
<div class="a" style="left:87px;top:131px;width:14px;height:2px;background:#d4d0d0;"></div>
<div class="a" style="left:87px;top:155px;width:14px;height:2px;background:#d4d0d0;"></div>
<div class="a" style="left:62px;top:312px;width:1px;height:20px;background:#a0a0a0;"></div>
<div class="a" style="left:87px;top:309px;width:1px;height:20px;background:#c8c8c8;"></div>
<div class="a" style="left:100px;top:121px;width:84px;height:23px;background:#e2e2e2;"></div>
<svg class="a" style="left:6px;top:8px;" width="12" height="8" viewBox="0 0 12 8"><path d="M0 0 H12 L6 7.5Z" fill="#5b4a46"/></svg>
<svg class="a" style="left:28px;top:4px;" width="16" height="16" viewBox="0 0 16 16"><rect x="0" y="0" width="16" height="16" rx="3" fill="#0f5fc0"/><path d="M4 8.3 L6.8 11 L12 5.5" fill="none" stroke="#fff" stroke-width="1.3"/></svg>
<svg class="a" style="left:50px;top:3px;" width="18" height="16" viewBox="0 0 18 16"><path d="M1 3 Q1 1 3 1 L7 1 L9 3 L15 3 Q17 3 17 5 L17 14 Q17 15 16 15 L2 15 Q1 15 1 14Z" fill="#c89a20"/><path d="M1 6 L15 5 Q17 5 17 7 L17 14 Q17 15 16 15 L3 15 Q1 15 1 13Z" fill="#efc44a"/></svg>
<div class="t" style="left:76px;top:4.64px;font-size:14.5px;line-height:16.67px;color:#000;">results.bin (G:...</div>
<svg class="a" style="left:31px;top:32px;" width="12" height="8" viewBox="0 0 12 8"><path d="M0 0 H12 L6 7.5Z" fill="#5b4a46"/></svg>
<svg class="a" style="left:53px;top:28px;" width="16" height="16" viewBox="0 0 16 16"><rect x="0" y="0" width="16" height="16" rx="3" fill="#0f5fc0"/><path d="M4 8.3 L6.8 11 L12 5.5" fill="none" stroke="#fff" stroke-width="1.3"/></svg>
<svg class="a" style="left:75px;top:27px;" width="18" height="16" viewBox="0 0 18 16"><path d="M1 3 Q1 1 3 1 L7 1 L9 3 L15 3 Q17 3 17 5 L17 14 Q17 15 16 15 L2 15 Q1 15 1 14Z" fill="#c89a20"/><path d="M1 6 L15 5 Q17 5 17 7 L17 14 Q17 15 16 15 L3 15 Q1 15 1 13Z" fill="#efc44a"/></svg>
<div class="t" style="left:101px;top:28.64px;font-size:14.5px;line-height:16.67px;color:#000;">Segmenta...</div>
<svg class="a" style="left:58px;top:54px;" width="8" height="12" viewBox="0 0 8 12"><path d="M0 0 V12 L7.5 6Z" fill="#5b4a46"/></svg>
<svg class="a" style="left:78px;top:52px;" width="16" height="16" viewBox="0 0 16 16"><rect x="0.5" y="0.5" width="15" height="15" rx="3" fill="#f7f7f7" stroke="#5a5a5a" stroke-width="1"/></svg>
<svg class="a" style="left:101px;top:52px;" width="16" height="16" viewBox="0 0 16 16"><path d="M7 1 L14.5 4.5 L14 12 L6.5 15 L1.5 9 L2 4Z" fill="#f3a060" stroke="#5a2e10" stroke-width=".9"/><path d="M2 4 L9 8 L7 1 M14.5 4.5 L9 8 L14 12 M9 8 L6.5 15 M9 8 L1.5 9" stroke="#5a2e10" stroke-width=".7" fill="none"/><path d="M2 4 L9 8 L1.5 9Z M9 8 L14 12 L6.5 15Z" fill="#e07a30"/></svg>
<div class="t" style="left:122px;top:52.64px;font-size:14.5px;line-height:16.67px;color:#000;">Mesh.r...</div>
<svg class="a" style="left:58px;top:78px;" width="8" height="12" viewBox="0 0 8 12"><path d="M0 0 V12 L7.5 6Z" fill="#5b4a46"/></svg>
<svg class="a" style="left:78px;top:76px;" width="16" height="16" viewBox="0 0 16 16"><rect x="0.5" y="0.5" width="15" height="15" rx="3" fill="#f7f7f7" stroke="#5a5a5a" stroke-width="1"/></svg>
<svg class="a" style="left:101px;top:76px;" width="16" height="16" viewBox="0 0 16 16"><path d="M7 1 L14.5 4.5 L14 12 L6.5 15 L1.5 9 L2 4Z" fill="#f3a060" stroke="#5a2e10" stroke-width=".9"/><path d="M2 4 L9 8 L7 1 M14.5 4.5 L9 8 L14 12 M9 8 L6.5 15 M9 8 L1.5 9" stroke="#5a2e10" stroke-width=".7" fill="none"/><path d="M2 4 L9 8 L1.5 9Z M9 8 L14 12 L6.5 15Z" fill="#e07a30"/></svg>
<div class="t" style="left:122px;top:76.64px;font-size:14.5px;line-height:16.67px;color:#000;">Mesh.s...</div>
<svg class="a" style="left:56px;top:104px;" width="12" height="8" viewBox="0 0 12 8"><path d="M0 0 H12 L6 7.5Z" fill="#5b4a46"/></svg>
<svg class="a" style="left:78px;top:100px;" width="16" height="16" viewBox="0 0 16 16"><rect x="0" y="0" width="16" height="16" rx="3" fill="#0f5fc0"/><path d="M4 8.3 L6.8 11 L12 5.5" fill="none" stroke="#fff" stroke-width="1.3"/></svg>
<svg class="a" style="left:101px;top:100px;" width="16" height="16" viewBox="0 0 16 16"><path d="M7 1 L14.5 4.5 L14 12 L6.5 15 L1.5 9 L2 4Z" fill="#f3a060" stroke="#5a2e10" stroke-width=".9"/><path d="M2 4 L9 8 L7 1 M14.5 4.5 L9 8 L14 12 M9 8 L6.5 15 M9 8 L1.5 9" stroke="#5a2e10" stroke-width=".7" fill="none"/><path d="M2 4 L9 8 L1.5 9Z M9 8 L14 12 L6.5 15Z" fill="#e07a30"/></svg>
<div class="t" style="left:122px;top:100.64px;font-size:14.5px;line-height:16.67px;color:#000;">Ref.se...</div>
<svg class="a" style="left:103px;top:124px;" width="16" height="16" viewBox="0 0 16 16"><rect x="0" y="0" width="16" height="16" rx="3" fill="#0f5fc0"/><path d="M4 8.3 L6.8 11 L12 5.5" fill="none" stroke="#fff" stroke-width="1.3"/></svg>
<svg class="a" style="left:125px;top:125px;" width="18" height="14" viewBox="0 0 18 14"><ellipse cx="9" cy="7" rx="8" ry="5.5" fill="#a8c8ea" stroke="#3d6fa8" stroke-width="1.2"/><path d="M4 6 Q7 3 10 5 Q13 3 15 7" stroke="#5a8cc8" fill="none" stroke-width=".8"/></svg>
<div class="t" style="left:148px;top:124.64px;font-size:14.5px;line-height:16.67px;color:#000;">ver...</div>
<svg class="a" style="left:103px;top:148px;" width="16" height="16" viewBox="0 0 16 16"><rect x="0" y="0" width="16" height="16" rx="3" fill="#0f5fc0"/><path d="M4 8.3 L6.8 11 L12 5.5" fill="none" stroke="#fff" stroke-width="1.3"/></svg>
<svg class="a" style="left:126px;top:147px;" width="16" height="18" viewBox="0 0 16 18"><rect x="1" y="2" width="11" height="14" rx="2" fill="#e8e8e8" stroke="#777"/><path d="M1 6 H12 M1 10 H12" stroke="#777"/><rect x="9" y="11" width="6" height="6" rx="1" fill="#ddd" stroke="#555"/></svg>
<div class="t" style="left:151px;top:148.64px;font-size:14.5px;line-height:16.67px;color:#000;">Co...</div>
<svg class="a" style="left:83px;top:174px;" width="8" height="12" viewBox="0 0 8 12"><path d="M0 0 V12 L7.5 6Z" fill="#5b4a46"/></svg>
<svg class="a" style="left:103px;top:172px;" width="16" height="16" viewBox="0 0 16 16"><rect x="0.5" y="0.5" width="15" height="15" rx="3" fill="#f7f7f7" stroke="#5a5a5a" stroke-width="1"/></svg>
<svg class="a" style="left:125px;top:171px;" width="17" height="17" viewBox="0 0 17 17"><path d="M4 3 Q8 1 12 3 V10 H4Z" fill="#b8662a"/><ellipse cx="8" cy="3" rx="4" ry="1.6" fill="#d88a4a"/><path d="M10 5 L16 15 H9Z" fill="#c87a3a"/><circle cx="6" cy="12" r="4.3" fill="#d8874a"/><circle cx="5" cy="10.8" r="1.6" fill="#f0b080"/></svg>
<div class="t" style="left:148px;top:172.64px;font-size:14.5px;line-height:16.67px;color:#000;">Di...</div>
<svg class="a" style="left:58px;top:198px;" width="8" height="12" viewBox="0 0 8 12"><path d="M0 0 V12 L7.5 6Z" fill="#5b4a46"/></svg>
<svg class="a" style="left:78px;top:196px;" width="16" height="16" viewBox="0 0 16 16"><rect x="0.5" y="0.5" width="15" height="15" rx="3" fill="#f7f7f7" stroke="#5a5a5a" stroke-width="1"/></svg>
<svg class="a" style="left:101px;top:196px;" width="16" height="16" viewBox="0 0 16 16"><path d="M7 1 L14.5 4.5 L14 12 L6.5 15 L1.5 9 L2 4Z" fill="#f3a060" stroke="#5a2e10" stroke-width=".9"/><path d="M2 4 L9 8 L7 1 M14.5 4.5 L9 8 L14 12 M9 8 L6.5 15 M9 8 L1.5 9" stroke="#5a2e10" stroke-width=".7" fill="none"/><path d="M2 4 L9 8 L1.5 9Z M9 8 L14 12 L6.5 15Z" fill="#e07a30"/></svg>
<div class="t" style="left:122px;top:196.64px;font-size:14.5px;line-height:16.67px;color:#000;">Ref.re...</div>
<svg class="a" style="left:31px;top:224px;" width="12" height="8" viewBox="0 0 12 8"><path d="M0 0 H12 L6 7.5Z" fill="#5b4a46"/></svg>
<svg class="a" style="left:53px;top:220px;" width="16" height="16" viewBox="0 0 16 16"><rect x="0" y="0" width="16" height="16" rx="3" fill="#0f5fc0"/><path d="M4 8.3 L6.8 11 L12 5.5" fill="none" stroke="#fff" stroke-width="1.3"/></svg>
<svg class="a" style="left:75px;top:219px;" width="18" height="16" viewBox="0 0 18 16"><path d="M1 3 Q1 1 3 1 L7 1 L9 3 L15 3 Q17 3 17 5 L17 14 Q17 15 16 15 L2 15 Q1 15 1 14Z" fill="#c89a20"/><path d="M1 6 L15 5 Q17 5 17 7 L17 14 Q17 15 16 15 L3 15 Q1 15 1 13Z" fill="#efc44a"/></svg>
<div class="t" style="left:101px;top:220.64px;font-size:14.5px;line-height:16.67px;color:#000;">Prepp.stl (...</div>
<svg class="a" style="left:58px;top:246px;" width="8" height="12" viewBox="0 0 8 12"><path d="M0 0 V12 L7.5 6Z" fill="#5b4a46"/></svg>
<svg class="a" style="left:78px;top:244px;" width="16" height="16" viewBox="0 0 16 16"><rect x="0.5" y="0.5" width="15" height="15" rx="3" fill="#f7f7f7" stroke="#5a5a5a" stroke-width="1"/></svg>
<svg class="a" style="left:101px;top:244px;" width="16" height="16" viewBox="0 0 16 16"><path d="M7 1 L14.5 4.5 L14 12 L6.5 15 L1.5 9 L2 4Z" fill="#f3a060" stroke="#5a2e10" stroke-width=".9"/><path d="M2 4 L9 8 L7 1 M14.5 4.5 L9 8 L14 12 M9 8 L6.5 15 M9 8 L1.5 9" stroke="#5a2e10" stroke-width=".7" fill="none"/><path d="M2 4 L9 8 L1.5 9Z M9 8 L14 12 L6.5 15Z" fill="#e07a30"/></svg>
<div class="t" style="left:122px;top:244.64px;font-size:14.5px;line-height:16.67px;color:#000;">Mesh.r...</div>
<svg class="a" style="left:58px;top:270px;" width="8" height="12" viewBox="0 0 8 12"><path d="M0 0 V12 L7.5 6Z" fill="#5b4a46"/></svg>
<svg class="a" style="left:78px;top:268px;" width="16" height="16" viewBox="0 0 16 16"><rect x="0.5" y="0.5" width="15" height="15" rx="3" fill="#f7f7f7" stroke="#5a5a5a" stroke-width="1"/></svg>
<svg class="a" style="left:101px;top:268px;" width="16" height="16" viewBox="0 0 16 16"><path d="M7 1 L14.5 4.5 L14 12 L6.5 15 L1.5 9 L2 4Z" fill="#f3a060" stroke="#5a2e10" stroke-width=".9"/><path d="M2 4 L9 8 L7 1 M14.5 4.5 L9 8 L14 12 M9 8 L6.5 15 M9 8 L1.5 9" stroke="#5a2e10" stroke-width=".7" fill="none"/><path d="M2 4 L9 8 L1.5 9Z M9 8 L14 12 L6.5 15Z" fill="#e07a30"/></svg>
<div class="t" style="left:122px;top:268.64px;font-size:14.5px;line-height:16.67px;color:#000;">Mesh.s...</div>
<svg class="a" style="left:56px;top:296px;" width="12" height="8" viewBox="0 0 12 8"><path d="M0 0 H12 L6 7.5Z" fill="#5b4a46"/></svg>
<svg class="a" style="left:78px;top:292px;" width="16" height="16" viewBox="0 0 16 16"><rect x="0" y="0" width="16" height="16" rx="3" fill="#0f5fc0"/><path d="M4 8.3 L6.8 11 L12 5.5" fill="none" stroke="#fff" stroke-width="1.3"/></svg>
<svg class="a" style="left:101px;top:292px;" width="16" height="16" viewBox="0 0 16 16"><path d="M7 1 L14.5 4.5 L14 12 L6.5 15 L1.5 9 L2 4Z" fill="#f3a060" stroke="#5a2e10" stroke-width=".9"/><path d="M2 4 L9 8 L7 1 M14.5 4.5 L9 8 L14 12 M9 8 L6.5 15 M9 8 L1.5 9" stroke="#5a2e10" stroke-width=".7" fill="none"/><path d="M2 4 L9 8 L1.5 9Z M9 8 L14 12 L6.5 15Z" fill="#e07a30"/></svg>
<div class="t" style="left:122px;top:292.64px;font-size:14.5px;line-height:16.67px;color:#000;">Mesh.s...</div>
<svg class="a" style="left:103px;top:316px;" width="16" height="16" viewBox="0 0 16 16"><rect x="0" y="0" width="16" height="16" rx="3" fill="#0f5fc0"/><path d="M4 8.3 L6.8 11 L12 5.5" fill="none" stroke="#fff" stroke-width="1.3"/></svg>
<svg class="a" style="left:125px;top:317px;" width="18" height="14" viewBox="0 0 18 14"><ellipse cx="9" cy="7" rx="8" ry="5.5" fill="#a8c8ea" stroke="#3d6fa8" stroke-width="1.2"/><path d="M4 6 Q7 3 10 5 Q13 3 15 7" stroke="#5a8cc8" fill="none" stroke-width=".8"/></svg>
<div class="t" style="left:148px;top:316.64px;font-size:14.5px;line-height:16.67px;color:#000;">ver...</div>
</div>
<div class="a" style="left:42px;top:474px;width:228px;height:23px;background:#dadada;border:1px solid #c9c9c9"></div>
<div class="t" style="left:46px;top:478.64px;font-size:14.5px;line-height:16.67px;color:#000;">Properties</div>
<svg class="a" style="left:252px;top:480px;" width="11" height="11" viewBox="0 0 11 11"><rect x="0.5" y="3.5" width="7" height="7" fill="none" stroke="#333" stroke-width="1.2"/><path d="M3.5 3.5 V0.5 H10.5 V7.5 H7.5" fill="none" stroke="#333" stroke-width="1.2"/><path d="M0.5 5 H7.5 M3.5 2 H10.5" stroke="#333" stroke-width="1.5"/></svg>
<div class="a" style="left:52px;top:510px;width:207px;height:332px;background:#fff;border:1px solid #8d96a0"></div>
<div class="a" style="left:238px;top:511px;width:20px;height:330px;background:#f0f0f0;"></div>
<div class="a" style="left:245px;top:532px;width:6px;height:109px;background:#868686;border-radius:3px"></div>
<div class="a" style="left:53px;top:820px;width:185px;height:21px;background:#f0f0f0;"></div>
<div class="a" style="left:74px;top:828px;width:82px;height:6px;background:#868686;border-radius:3px"></div>
<div class="a" style="left:53px;top:511px;width:184px;height:309px;overflow:hidden"><div class="a" style="left:0px;top:0px;width:185px;height:30px;background:#fff;"></div>
<div class="a" style="left:114px;top:0px;width:1px;height:30px;background:#e6e6e6;"></div>
<div class="t" style="left:5px;top:7.64px;font-size:14.5px;line-height:16.67px;color:#000;">Property</div>
<div class="t" style="left:120px;top:7.64px;font-size:14.5px;line-height:16.67px;color:#000;">State/Valu</div>
<div class="a" style="left:0px;top:30px;width:185px;height:22px;background:#a9a9a9;"></div>
<div class="t" style="left:0px;top:33.14px;font-size:14.5px;line-height:16.67px;color:#f2f2f2;">CC Object</div>
<div class="a" style="left:0px;top:52px;width:185px;height:22px;background:#f4f4f4;"></div>
<div class="a" style="left:0px;top:74px;width:185px;height:22px;background:#fff;"></div>
<div class="a" style="left:0px;top:96px;width:185px;height:26px;background:#f4f4f4;"></div>
<div class="a" style="left:0px;top:122px;width:185px;height:22px;background:#fff;"></div>
<div class="a" style="left:0px;top:144px;width:185px;height:65px;background:#f4f4f4;"></div>
<div class="a" style="left:0px;top:209px;width:185px;height:63px;background:#fff;"></div>
<div class="a" style="left:0px;top:272px;width:185px;height:47px;background:#f4f4f4;"></div>
<div class="t" style="left:3px;top:54.94px;font-size:14.5px;line-height:16.67px;color:#000;">Name</div>
<div class="t" style="left:118.5px;top:54.94px;font-size:14.5px;line-height:16.67px;color:#000;">vertices.ex</div>
<div class="t" style="left:3px;top:77.24px;font-size:14.5px;line-height:16.67px;color:#000;">Visible</div>
<svg class="a" style="left:118px;top:77px;" width="16" height="16" viewBox="0 0 16 16"><rect x="0" y="0" width="16" height="16" rx="3" fill="#0f5fc0"/><path d="M4 8.3 L6.8 11 L12 5.5" fill="none" stroke="#fff" stroke-width="1.3"/></svg>
<div class="t" style="left:3px;top:100.94px;font-size:14.5px;line-height:16.67px;color:#000;">Colors</div>
<div class="a" style="left:115px;top:95px;width:80px;height:27px;background:#fdfdfd;border:1px solid #d0d0d0;border-radius:3px"></div>
<div class="t" style="left:119px;top:100.94px;font-size:14.5px;line-height:16.67px;color:#000;">None</div>
<div class="t" style="left:3px;top:125.14px;font-size:14.5px;line-height:16.67px;color:#000;">Show name (i...</div>
<svg class="a" style="left:118px;top:125px;" width="16" height="16" viewBox="0 0 16 16"><rect x="0.5" y="0.5" width="15" height="15" rx="3" fill="#f7f7f7" stroke="#5a5a5a" stroke-width="1"/></svg>
<div class="t" style="left:3px;top:167.64px;font-size:14.5px;line-height:16.67px;color:#000;">Box dimensions</div>
<div class="t" style="left:118px;top:145.64px;font-size:14.5px;line-height:16.67px;color:#000;">X: 2.89573</div>
<div class="t" style="left:118px;top:167.14px;font-size:14.5px;line-height:16.67px;color:#000;">Y: 4.56574</div>
<div class="t" style="left:118px;top:189.14px;font-size:14.5px;line-height:16.67px;color:#000;">Z: 10.0089</div>
<div class="t" style="left:3px;top:229.64px;font-size:14.5px;line-height:16.67px;color:#000;">Shifted box ce...</div>
<div class="t" style="left:118px;top:209.64px;font-size:14.5px;line-height:16.67px;color:#000;">X: 6.1762</div>
<div class="t" style="left:118px;top:229.64px;font-size:14.5px;line-height:16.67px;color:#000;">Y: 4.55811</div>
<div class="t" style="left:118px;top:249.64px;font-size:14.5px;line-height:16.67px;color:#000;">Z: 13.8106</div>
<div class="t" style="left:3px;top:290.64px;font-size:14.5px;line-height:16.67px;color:#000;">Global box ce...</div>
<div class="t" style="left:118px;top:270.64px;font-size:14.5px;line-height:16.67px;color:#000;">X: 6.17620</div>
<div class="t" style="left:118px;top:290.64px;font-size:14.5px;line-height:16.67px;color:#000;">Y: 4.55810</div>
</div>
<div class="a" style="left:41px;top:859px;width:1805px;height:22px;background:#dadada;border:1px solid #c9c9c9"></div>
<div class="t" style="left:46px;top:864.14px;font-size:14.5px;line-height:16.67px;color:#000;">Console</div>
<svg class="a" style="left:1800px;top:865px;" width="11" height="11" viewBox="0 0 11 11"><rect x="0.5" y="3.5" width="7" height="7" fill="none" stroke="#333" stroke-width="1.2"/><path d="M3.5 3.5 V0.5 H10.5 V7.5 H7.5" fill="none" stroke="#333" stroke-width="1.2"/><path d="M0.5 5 H7.5 M3.5 2 H10.5" stroke="#333" stroke-width="1.5"/></svg>
<svg class="a" style="left:1826px;top:866px;" width="10" height="10" viewBox="0 0 10 10"><path d="M0.5 0.5 L9.5 9.5 M9.5 0.5 L0.5 9.5" stroke="#222" stroke-width="1.5"/></svg>
<div class="a" style="left:52px;top:895px;width:1782px;height:89px;background:#fff;border:1px solid #8d96a0"></div>
<div class="a" style="left:53px;top:896px;width:1759px;height:22px;background:#f4f4f4;"></div>
<div class="a" style="left:53px;top:941px;width:1759px;height:22px;background:#f4f4f4;"></div>
<div class="a" style="left:1812px;top:896px;width:21px;height:87px;background:#f0f0f0;"></div>
<div class="a" style="left:1819px;top:939px;width:6px;height:22px;background:#868686;border-radius:3px"></div>
<div class="t" style="left:57.5px;top:900.94px;font-size:14.5px;line-height:16.67px;color:#000;">[13:37:57] Sum of all valid squared values = 8.386785</div>
<div class="t" style="left:57.5px;top:922.64px;font-size:14.5px;line-height:16.67px;color:#000;">[13:37:57] Average value = 0.0229976</div>
<div class="t" style="left:57.5px;top:944.44px;font-size:14.5px;line-height:16.67px;color:#000;">[13:37:57] RMS (Root Mean Square) = 0.057839</div>
<div class="a" style="left:1845px;top:95px;width:1px;height:758px;background:#ffffff;"></div>
<div class="a" style="left:1846px;top:95px;width:72px;height:899px;background:#f0f0f0;"></div>
<div class="a" style="left:1845px;top:993px;width:73px;height:1px;background:#d4d4d4;"></div>
<div class="a" style="left:1849px;top:99px;width:2px;height:2px;background:#a8a8a8;"></div>
<div class="a" style="left:1853px;top:99px;width:2px;height:2px;background:#a8a8a8;"></div>
<div class="a" style="left:1857px;top:99px;width:2px;height:2px;background:#a8a8a8;"></div>
<div class="a" style="left:1861px;top:99px;width:2px;height:2px;background:#a8a8a8;"></div>
<div class="a" style="left:1865px;top:99px;width:2px;height:2px;background:#a8a8a8;"></div>
<div class="a" style="left:1869px;top:99px;width:2px;height:2px;background:#a8a8a8;"></div>
<div class="a" style="left:1873px;top:99px;width:2px;height:2px;background:#a8a8a8;"></div>
<div class="a" style="left:1877px;top:99px;width:2px;height:2px;background:#a8a8a8;"></div>
<div class="a" style="left:1881px;top:99px;width:2px;height:2px;background:#a8a8a8;"></div>
<div class="a" style="left:1885px;top:99px;width:2px;height:2px;background:#a8a8a8;"></div>
<div class="a" style="left:1889px;top:99px;width:2px;height:2px;background:#a8a8a8;"></div>
<div class="a" style="left:1893px;top:99px;width:2px;height:2px;background:#a8a8a8;"></div>
<div class="a" style="left:1897px;top:99px;width:2px;height:2px;background:#a8a8a8;"></div>
<div class="a" style="left:1901px;top:99px;width:2px;height:2px;background:#a8a8a8;"></div>
<div class="a" style="left:1905px;top:99px;width:2px;height:2px;background:#a8a8a8;"></div>
<div class="a" style="left:1909px;top:99px;width:2px;height:2px;background:#a8a8a8;"></div>
<div class="a" style="left:1913px;top:99px;width:2px;height:2px;background:#a8a8a8;"></div>
<svg class="a" style="left:1867px;top:110px;" width="30" height="30" viewBox="0 0 30 30"><circle cx="15" cy="15" r="13" fill="none" stroke="#777" stroke-width="4"/><circle cx="15" cy="15" r="13" fill="none" stroke="#a5a5a5" stroke-width="2.5"/><path d="M7 22 L23 8" stroke="#999" stroke-width="4"/></svg>
<svg class="a" style="left:1872px;top:151px;" width="22" height="21" viewBox="0 0 22 21"><rect width="22" height="21" fill="#8a8a8a"/><circle cx="9" cy="8" r="5" fill="#b0b0b0"/><circle cx="14" cy="6" r="4" fill="#c8c8c8"/><text x="11" y="19" text-anchor="middle" font-size="7" fill="#fff" font-family="Liberation Mono">EDL</text></svg>
<svg class="a" style="left:1872px;top:187px;" width="22" height="21" viewBox="0 0 22 21"><rect width="22" height="21" fill="#8a8a8a"/><circle cx="9" cy="8" r="5" fill="#b0b0b0"/><circle cx="14" cy="6" r="4" fill="#c8c8c8"/><text x="11" y="19" text-anchor="middle" font-size="6" fill="#fff" font-family="Liberation Mono">SSAO</text></svg>
<div class="a" style="left:1849px;top:215px;width:69px;height:1px;background:#c8c8c8;"></div>
<div class="a" style="left:1849px;top:221px;width:2px;height:2px;background:#a8a8a8;"></div>
<div class="a" style="left:1853px;top:221px;width:2px;height:2px;background:#a8a8a8;"></div>
<div class="a" style="left:1857px;top:221px;width:2px;height:2px;background:#a8a8a8;"></div>
<div class="a" style="left:1861px;top:221px;width:2px;height:2px;background:#a8a8a8;"></div>
<div class="a" style="left:1865px;top:221px;width:2px;height:2px;background:#a8a8a8;"></div>
<div class="a" style="left:1869px;top:221px;width:2px;height:2px;background:#a8a8a8;"></div>
<div class="a" style="left:1873px;top:221px;width:2px;height:2px;background:#a8a8a8;"></div>
<div class="a" style="left:1877px;top:221px;width:2px;height:2px;background:#a8a8a8;"></div>
<div class="a" style="left:1881px;top:221px;width:2px;height:2px;background:#a8a8a8;"></div>
<div class="a" style="left:1885px;top:221px;width:2px;height:2px;background:#a8a8a8;"></div>
<div class="a" style="left:1889px;top:221px;width:2px;height:2px;background:#a8a8a8;"></div>
<div class="a" style="left:1893px;top:221px;width:2px;height:2px;background:#a8a8a8;"></div>
<div class="a" style="left:1897px;top:221px;width:2px;height:2px;background:#a8a8a8;"></div>
<div class="a" style="left:1901px;top:221px;width:2px;height:2px;background:#a8a8a8;"></div>
<div class="a" style="left:1905px;top:221px;width:2px;height:2px;background:#a8a8a8;"></div>
<div class="a" style="left:1909px;top:221px;width:2px;height:2px;background:#a8a8a8;"></div>
<div class="a" style="left:1913px;top:221px;width:2px;height:2px;background:#a8a8a8;"></div>
<svg class="a" style="left:1867px;top:232px;" width="30" height="28" viewBox="0 0 30 28"><path d="M1 2 L28 0 L28 6 L1 8Z" fill="#444"/><path d="M5 1.7 L8 7.5 M12 1.2 L15 7 M19 0.7 L22 6.5" stroke="#ddd" stroke-width="2"/><rect x="1" y="9" width="28" height="19" fill="#888"/><rect x="3" y="11" width="24" height="15" fill="#a0a0a0"/></svg>
<svg class="a" style="left:1874px;top:268px;" width="16" height="29" viewBox="0 0 16 29"><path d="M7 0 V17" stroke="#b87820" stroke-width="2"/><path d="M2 17 H13 L15 28 H1Z" fill="#e8a040" stroke="#a06010" stroke-width=".8"/></svg>
<svg class="a" style="left:1870px;top:307px;" width="25" height="25" viewBox="0 0 25 25"><rect x="1" y="1" width="23" height="23" rx="4" fill="#dde" stroke="#333" stroke-width="1.5"/><circle cx="12.5" cy="12.5" r="9" fill="#fff" stroke="#3a4a5a" stroke-width="1.5"/><path d="M17 7 L11 11 L8 18 L14 14Z" fill="#e03030"/></svg>
<svg class="a" style="left:1870px;top:342px;" width="25" height="28" viewBox="0 0 25 28"><path d="M12.5 1 Q18 4 24 3 V14 Q23 23 12.5 27 Q2 23 1 14 V3 Q7 4 12.5 1Z" fill="#9a9a9a"/><path d="M12.5 5 Q17 7 21 6 V14 Q20 20 12.5 23 Q5 20 4 14 V6 Q8 7 12.5 5Z" fill="#c4c4c4"/></svg>
<div class="t" style="left:1854px;top:376.62px;font-size:13px;line-height:14.95px;color:#000;">CSF Filter</div>
<svg class="a" style="left:1874px;top:402px;" width="16" height="22" viewBox="0 0 16 22"><path d="M2 3 H12 M10 0.5 L14 3 L10 5.5" stroke="#1a237e" stroke-width="1.6" fill="none"/><text x="8" y="21" text-anchor="middle" font-size="15" font-weight="bold" fill="#1a237e" font-family="Liberation Sans">N</text></svg>
<svg class="a" style="left:1872px;top:438px;" width="22" height="22" viewBox="0 0 22 22"><rect width="22" height="22" fill="#fff"/><path d="M4 6 L11 1 L19 4 L18 13 L8 15Z" fill="#777"/><path d="M8 6 L14 4 L16 10 L10 12Z" fill="#aaa"/><text x="11" y="21" text-anchor="middle" font-size="7" font-weight="bold" fill="#000" font-family="Liberation Sans">HPR</text></svg>
<svg class="a" style="left:1867px;top:468px;" width="30" height="33" viewBox="0 0 30 33"><text x="15" y="9" text-anchor="middle" font-size="9" font-weight="bold" fill="#aaa" font-family="Liberation Sans">M3C2</text><path d="M3 18 Q15 10 27 16 L26 30 Q14 24 4 31Z" fill="none" stroke="#999" stroke-width="1" stroke-dasharray="2 2"/><g fill="#666"><circle cx="8" cy="20" r="1"/><circle cx="15" cy="17" r="1"/><circle cx="22" cy="22" r="1"/><circle cx="12" cy="26" r="1"/></g></svg>
<svg class="a" style="left:1870px;top:508px;" width="25" height="28" viewBox="0 0 25 28"><path d="M12.5 1 Q18 4 24 3 V14 Q23 23 12.5 27 Q2 23 1 14 V3 Q7 4 12.5 1Z" fill="#9a9a9a"/><path d="M12.5 5 Q17 7 21 6 V14 Q20 20 12.5 23 Q5 20 4 14 V6 Q8 7 12.5 5Z" fill="#c4c4c4"/></svg>
<svg class="a" style="left:1872px;top:547px;" width="22" height="21" viewBox="0 0 22 21"><rect width="22" height="21" fill="#555"/><path d="M3 3 Q11 -2 19 4 Q20 12 11 14 Q3 12 3 3" fill="#999"/><text x="11" y="20" text-anchor="middle" font-size="7.5" font-weight="bold" fill="#fff" font-family="Liberation Sans">PCV</text></svg>
<svg class="a" style="left:1872px;top:582px;" width="22" height="22" viewBox="0 0 22 22"><rect width="22" height="22" fill="#fff"/><path d="M11 1 L21 8 L17 20 H5 L1 8Z" fill="#4a8a3a" stroke="#a07040" stroke-width="1.2"/><path d="M11 6 L16 10 L14 16 H8 L6 10Z" fill="#62a850"/></svg>
<svg class="a" style="left:1872px;top:618px;" width="22" height="22" viewBox="0 0 22 22"><rect width="22" height="22" fill="#fff"/><path d="M2 14 L10 4 L20 12Z" fill="#3a3"/><path d="M2 14 L11 12 L20 14 L10 6Z" fill="#e040d0"/><circle cx="15" cy="6" r="4.5" fill="#8a40c8"/><text x="11" y="21" text-anchor="middle" font-size="7.5" font-weight="bold" fill="#000" font-family="Liberation Sans">RSD</text></svg>
<svg class="a" style="left:1872px;top:653px;" width="22" height="25" viewBox="0 0 22 25"><g fill="#ccc"><circle cx="3" cy="3" r="1.5"/><circle cx="9" cy="3" r="1.5"/><circle cx="3" cy="9" r="1.5"/><circle cx="3" cy="15" r="1.5"/><circle cx="3" cy="21" r="1.5"/></g><g fill="#e55"><circle cx="15" cy="21" r="1.5"/><circle cx="20" cy="15" r="1.5"/><circle cx="20" cy="21" r="1.5"/><circle cx="9" cy="21" r="1.5"/><circle cx="20" cy="9" r="1.5"/></g><circle cx="14" cy="8" r="3.5" fill="none" stroke="#111" stroke-width="2.2"/><rect x="17.3" y="6.8" width="2.4" height="2.4" fill="#111"/><rect x="16.0" y="10.0" width="2.4" height="2.4" fill="#111"/><rect x="12.8" y="11.3" width="2.4" height="2.4" fill="#111"/><rect x="9.6" y="10.0" width="2.4" height="2.4" fill="#111"/><rect x="8.3" y="6.8" width="2.4" height="2.4" fill="#111"/><rect x="9.6" y="3.6" width="2.4" height="2.4" fill="#111"/><rect x="12.8" y="2.3" width="2.4" height="2.4" fill="#111"/><rect x="16.0" y="3.6" width="2.4" height="2.4" fill="#111"/><circle cx="8" cy="16" r="3" fill="none" stroke="#111" stroke-width="2.2"/><rect x="10.8" y="14.8" width="2.4" height="2.4" fill="#111"/><rect x="9.6" y="17.6" width="2.4" height="2.4" fill="#111"/><rect x="6.8" y="18.8" width="2.4" height="2.4" fill="#111"/><rect x="4.0" y="17.6" width="2.4" height="2.4" fill="#111"/><rect x="2.8" y="14.8" width="2.4" height="2.4" fill="#111"/><rect x="4.0" y="12.0" width="2.4" height="2.4" fill="#111"/><rect x="6.8" y="10.8" width="2.4" height="2.4" fill="#111"/><rect x="9.6" y="12.0" width="2.4" height="2.4" fill="#111"/></svg>
<svg class="a" style="left:1870px;top:688px;" width="25" height="26" viewBox="0 0 25 26"><path d="M12.5 13 L24 18 L12.5 24 L1 18Z" fill="#2a8ac8"/><path d="M12.5 8 L24 13 L12.5 19 L1 13Z" fill="#3ad0c8"/><path d="M12.5 1 L24 7 L12.5 13 L1 7Z" fill="#f0c040" stroke="#a08020" stroke-width=".6"/></svg>
<svg class="a" style="left:1867px;top:728px;" width="30" height="19" viewBox="0 0 30 19"><ellipse cx="15" cy="9.5" rx="13.5" ry="7.5" fill="none" stroke="#e05070" stroke-width="1.5"/><g fill="#fff" stroke="#e05070"><rect x="13" y="0.5" width="4" height="3"/><rect x="13" y="15.5" width="4" height="3"/><rect x="0.5" y="8" width="3" height="3"/><rect x="26.5" y="8" width="3" height="3"/></g></svg>
<svg class="a" style="left:1874px;top:765px;" width="16" height="16" viewBox="0 0 16 16"><path d="M1 15 V7 Q1 2 8 2 Q15 2 15 7 V15 H11 V8 Q11 6 8 6 Q5 6 5 8 V15Z" fill="#111"/><path d="M3 2 H13 V5 H3Z" fill="#1a5ad0"/></svg>
<svg class="a" style="left:1872px;top:796px;" width="22" height="25" viewBox="0 0 22 25"><g fill="#ccc"><circle cx="3" cy="3" r="1.5"/><circle cx="9" cy="3" r="1.5"/><circle cx="15" cy="3" r="1.5"/><circle cx="3" cy="9" r="1.5"/><circle cx="3" cy="15" r="1.5"/><circle cx="3" cy="21" r="1.5"/></g><g fill="#e55"><circle cx="15" cy="21" r="1.5"/><circle cx="20" cy="15" r="1.5"/><circle cx="20" cy="21" r="1.5"/><circle cx="20" cy="9" r="1.5"/></g><path d="M9 22 L6 14 Q6 12 8 13 L10 16 V6 Q10 4 12 5 V12 L17 13 Q19 14 18 18 L16 23Z" fill="#f4c8b0" stroke="#c03030" stroke-width="1"/></svg>
<svg class="a" style="left:1866px;top:831px;" width="31" height="28" viewBox="0 0 31 28"><path d="M5 14 Q2 7 9 6 Q12 0 19 2 Q25 3 25 8 Q30 9 28 14" fill="#fff" stroke="#6aa8d8" stroke-width="1.6"/><rect x="3" y="16" width="26" height="10" fill="#e8e4f4" stroke="#6a6aa8" stroke-width="1.5"/><path d="M7 16 V21 M11 16 V20 M15 16 V21 M19 16 V20 M23 16 V21" stroke="#6a6aa8"/></svg>
<svg class="a" style="left:1867px;top:865px;" width="30" height="31" viewBox="0 0 30 31"><path d="M6 1 L2.5 6 H9.5Z M6 3.5 L1.5 9 H10.5Z" fill="#111"/><path d="M6 7 V11" stroke="#111" stroke-width="1.4"/><path d="M24 1 L20.5 6 H27.5Z M24 3.5 L19.5 9 H28.5Z" fill="#111"/><path d="M24 7 V11" stroke="#111" stroke-width="1.4"/><path d="M15 7 L11.5 12 H18.5Z M15 9.5 L10.5 15 H19.5Z" fill="#111"/><path d="M15 13 V17" stroke="#111" stroke-width="1.4"/><path d="M6 13 L2.5 18 H9.5Z M6 15.5 L1.5 21 H10.5Z" fill="#111"/><path d="M6 19 V23" stroke="#111" stroke-width="1.4"/><path d="M24 13 L20.5 18 H27.5Z M24 15.5 L19.5 21 H28.5Z" fill="#111"/><path d="M24 19 V23" stroke="#111" stroke-width="1.4"/><path d="M15 19 L11.5 24 H18.5Z M15 21.5 L10.5 27 H19.5Z" fill="#111"/><path d="M15 25 V29" stroke="#111" stroke-width="1.4"/></svg>
<div class="a" style="left:275px;top:95px;width:1570px;height:758px;background:linear-gradient(#0a6697,#000000);"></div>
<svg class="a" style="left:275px;top:95px" width="1570" height="758" viewBox="275 95 1570 758"><defs><clipPath id="cl"><path d="M553 115 L571 126 L582 139 L592 150 L635 164 L670 171 L700 182 L720 186 L791 202 L838 210 L852 217 L913 232 L980 247 L1000 251 L1074 269 L1185 298 L1263 313 L1358 335 L1452 370 L1477 392 L1490 420 L1491 442 L1471 471 L1446 483 L1398 493 L1326 483 L1232 471 L1106 452 L1011 446 L883 446 L791 438 L700 424 L670 411 L624 404 L589 401 L557 401 L532 404 L511 419 L495 434 L486 426 L475 408 L468 390 L470 312 L474 259 L482 206 L490 178 L500 164 L511 146 L525 132 L543 121Z"/></clipPath><filter id="wsp" filterUnits="userSpaceOnUse" x="460" y="105" width="1040" height="395" color-interpolation-filters="sRGB"><feTurbulence type="fractalNoise" baseFrequency="0.9" numOctaves="1" seed="4"/><feColorMatrix type="matrix" values="0 0 0 0 1.000  0 0 0 0 1.000  0 0 0 0 1.000  30 0 0 0 -14.530"/></filter><filter id="wsp2" filterUnits="userSpaceOnUse" x="460" y="105" width="1040" height="395" color-interpolation-filters="sRGB"><feTurbulence type="fractalNoise" baseFrequency="0.9" numOctaves="1" seed="21"/><feColorMatrix type="matrix" values="0 0 0 0 1.000  0 0 0 0 1.000  0 0 0 0 1.000  30 0 0 0 -15.817"/></filter><filter id="wspE" filterUnits="userSpaceOnUse" x="460" y="105" width="1040" height="395" color-interpolation-filters="sRGB"><feTurbulence type="fractalNoise" baseFrequency="0.9" numOctaves="1" seed="41"/><feColorMatrix type="matrix" values="0 0 0 0 1.000  0 0 0 0 1.000  0 0 0 0 1.000  30 0 0 0 -15.320"/></filter><filter id="wsp3" filterUnits="userSpaceOnUse" x="460" y="105" width="1040" height="395" color-interpolation-filters="sRGB"><feTurbulence type="fractalNoise" baseFrequency="0.9" numOctaves="1" seed="31"/><feColorMatrix type="matrix" values="0 0 0 0 1.000  0 0 0 0 1.000  0 0 0 0 1.000  30 0 0 0 -18.196"/></filter><filter id="bsq" filterUnits="userSpaceOnUse" x="460" y="105" width="1040" height="395" color-interpolation-filters="sRGB"><feTurbulence type="fractalNoise" baseFrequency="0.9" numOctaves="1" seed="11"/><feColorMatrix type="matrix" values="0 0 0 0 0.039  0 0 0 0 0.216  0 0 0 0 0.843  200 0 0 0 -147.100"/><feMorphology operator="dilate" radius="4 3"/></filter><filter id="bdot" filterUnits="userSpaceOnUse" x="460" y="105" width="1040" height="395" color-interpolation-filters="sRGB"><feTurbulence type="fractalNoise" baseFrequency="0.9" numOctaves="1" seed="13"/><feColorMatrix type="matrix" values="0 0 0 0 0.078  0 0 0 0 0.275  0 0 0 0 0.843  30 0 0 0 -16.166"/></filter><filter id="bsq2" filterUnits="userSpaceOnUse" x="460" y="105" width="1040" height="395" color-interpolation-filters="sRGB"><feTurbulence type="fractalNoise" baseFrequency="0.9" numOctaves="1" seed="5"/><feColorMatrix type="matrix" values="0 0 0 0 0.031  0 0 0 0 0.176  0 0 0 0 0.902  200 0 0 0 -141.100"/><feMorphology operator="dilate" radius="3 2"/></filter><filter id="tsq" filterUnits="userSpaceOnUse" x="460" y="105" width="1040" height="395" color-interpolation-filters="sRGB"><feTurbulence type="fractalNoise" baseFrequency="0.9" numOctaves="1" seed="8"/><feColorMatrix type="matrix" values="0 0 0 0 0.118  0 0 0 0 0.588  0 0 0 0 0.471  200 0 0 0 -147.900"/><feMorphology operator="dilate" radius="3 2"/></filter><filter id="gsq" filterUnits="userSpaceOnUse" x="460" y="105" width="1040" height="395" color-interpolation-filters="sRGB"><feTurbulence type="fractalNoise" baseFrequency="0.9" numOctaves="1" seed="17"/><feColorMatrix type="matrix" values="0 0 0 0 0.275  0 0 0 0 0.843  0 0 0 0 0.157  200 0 0 0 -144.700"/><feMorphology operator="dilate" radius="3 2"/></filter><filter id="tq2" filterUnits="userSpaceOnUse" x="460" y="105" width="1040" height="395" color-interpolation-filters="sRGB"><feTurbulence type="fractalNoise" baseFrequency="0.9" numOctaves="1" seed="23"/><feColorMatrix type="matrix" values="0 0 0 0 0.098  0 0 0 0 0.471  0 0 0 0 0.588  200 0 0 0 -143.900"/><feMorphology operator="dilate" radius="3 2"/></filter><linearGradient id="gL" gradientUnits="userSpaceOnUse" x1="1080" y1="0" x2="1190" y2="0"><stop offset="0" stop-color="#fff"/><stop offset="1" stop-color="#000"/></linearGradient><linearGradient id="gR" gradientUnits="userSpaceOnUse" x1="1150" y1="0" x2="1230" y2="0"><stop offset="0" stop-color="#000"/><stop offset="1" stop-color="#fff"/></linearGradient><linearGradient id="gShade" gradientUnits="userSpaceOnUse" x1="690" y1="170" x2="740" y2="440"><stop offset="0" stop-color="#000" stop-opacity="0"/><stop offset="0.45" stop-color="#000" stop-opacity="0.1"/><stop offset="1" stop-color="#000" stop-opacity="0.45"/></linearGradient><mask id="mL" maskUnits="userSpaceOnUse" x="460" y="105" width="1040" height="395"><rect x="460" y="105" width="1040" height="395" fill="url(#gL)"/><rect x="460" y="105" width="1040" height="395" fill="url(#gShade)"/><ellipse cx="546" cy="272" rx="50" ry="120" transform="rotate(6 546 272)" fill="#000" opacity="0.8"/></mask><mask id="mR" maskUnits="userSpaceOnUse" x="460" y="105" width="1040" height="395"><rect x="460" y="105" width="1040" height="395" fill="url(#gR)"/></mask><mask id="mRing" maskUnits="userSpaceOnUse" x="460" y="105" width="1040" height="395"><path d="M460 105 H590 L600 150 L598 400 L460 500Z" fill="#fff"/><ellipse cx="546" cy="272" rx="50" ry="120" transform="rotate(6 546 272)" fill="#000"/></mask><mask id="mBot" maskUnits="userSpaceOnUse" x="460" y="105" width="1040" height="395"><path d="M600 375 L700 395 L900 415 L1080 425 L1120 400 L1120 460 L600 460Z" fill="#fff"/></mask><mask id="mGreen" maskUnits="userSpaceOnUse" x="460" y="105" width="1040" height="395"><ellipse cx="1143" cy="372" rx="38" ry="70" transform="rotate(8 1143 372)" fill="none" stroke="#fff" stroke-width="18"/></mask><radialGradient id="gTeal" gradientUnits="userSpaceOnUse" cx="1070" cy="360" r="120"><stop offset="0" stop-color="#fff"/><stop offset="1" stop-color="#000"/></radialGradient><mask id="mW" maskUnits="userSpaceOnUse" x="460" y="105" width="1040" height="395"><rect x="460" y="105" width="1040" height="395" fill="#fff"/><ellipse cx="546" cy="272" rx="50" ry="120" transform="rotate(6 546 272)" fill="#000"/></mask><mask id="mE" maskUnits="userSpaceOnUse" x="460" y="105" width="1040" height="395"><ellipse cx="546" cy="272" rx="50" ry="120" transform="rotate(6 546 272)" fill="#fff"/></mask><mask id="mLip" maskUnits="userSpaceOnUse" x="460" y="105" width="1040" height="395"><path d="M575 160 Q612 260 585 395" fill="none" stroke="#fff" stroke-width="7"/></mask><mask id="mTeal" maskUnits="userSpaceOnUse" x="460" y="105" width="1040" height="395"><rect x="460" y="105" width="1040" height="395" fill="url(#gTeal)"/></mask><mask id="mBand" maskUnits="userSpaceOnUse" x="460" y="105" width="1040" height="395"><path d="M560 402 L624 404 L700 424 L791 438 L883 446 L1011 446 L1106 452 L1232 471 L1326 483 L1398 493 L1446 483 L1471 471 L1491 442" fill="none" stroke="#fff" stroke-width="34"/></mask><mask id="mEdge" maskUnits="userSpaceOnUse" x="460" y="105" width="1040" height="395"><linearGradient id="gET" gradientUnits="userSpaceOnUse" x1="830" y1="0" x2="950" y2="0"><stop offset="0" stop-color="#000"/><stop offset="1" stop-color="#fff"/></linearGradient><rect x="460" y="105" width="1040" height="280" fill="url(#gET)"/><path d="M540 380 L1500 380 L1500 500 L540 500Z" fill="#fff"/></mask></defs><g clip-path="url(#cl)"><rect x="460" y="105" width="1040" height="395" fill="#0a4a6e"/><ellipse cx="546" cy="272" rx="50" ry="120" transform="rotate(6 546 272)" fill="#0f5068"/><rect x="460" y="105" width="1040" height="395" fill="#000" filter="url(#bdot)" mask="url(#mL)"/><rect x="460" y="105" width="1040" height="395" fill="#000" filter="url(#wsp)" mask="url(#mW)"/><rect x="460" y="105" width="1040" height="395" fill="#000" filter="url(#wspE)" mask="url(#mE)"/><rect x="460" y="105" width="1040" height="395" fill="#000" filter="url(#wsp2)" mask="url(#mLip)"/><rect x="460" y="105" width="1040" height="395" fill="#000" filter="url(#wsp2)" mask="url(#mR)"/><rect x="460" y="105" width="1040" height="395" fill="#000" filter="url(#tsq)" mask="url(#mBot)"/><rect x="460" y="105" width="1040" height="395" fill="#000" filter="url(#bsq)" mask="url(#mL)"/><rect x="460" y="105" width="1040" height="395" fill="#000" filter="url(#bsq2)" mask="url(#mRing)"/><rect x="460" y="105" width="1040" height="395" fill="#000" filter="url(#tq2)" mask="url(#mTeal)"/><rect x="460" y="105" width="1040" height="395" fill="#000" filter="url(#gsq)" mask="url(#mGreen)"/><rect x="460" y="105" width="1040" height="395" fill="#000" filter="url(#wsp3)" mask="url(#mL)"/><rect x="460" y="105" width="1040" height="395" fill="#000" filter="url(#wsp3)" mask="url(#mBand)"/><rect x="460" y="105" width="1040" height="395" fill="#000" filter="url(#wsp2)" mask="url(#mBand)"/><path d="M553 115 L571 126 L582 139 L592 150 L635 164 L670 171 L700 182 L720 186 L791 202 L838 210 L852 217 L913 232 L980 247 L1000 251 L1074 269 L1185 298 L1263 313 L1358 335 L1452 370 L1477 392 L1490 420 L1491 442 L1471 471 L1446 483 L1398 493 L1326 483 L1232 471 L1106 452 L1011 446 L883 446 L791 438 L700 424 L670 411 L624 404 L589 401 L557 401 L532 404 L511 419 L495 434 L486 426 L475 408 L468 390 L470 312 L474 259 L482 206 L490 178 L500 164 L511 146 L525 132 L543 121Z" fill="none" stroke="#fff" stroke-width="10" opacity="0.9" mask="url(#mEdge)"/><path d="M1000 449 L1106 452 L1232 471 L1326 483 L1398 493 L1446 483 L1471 471" fill="none" stroke="#fff" stroke-width="16" opacity="0.9"/><rect x="1152" y="430" width="6" height="5" fill="#7ee61e"/><rect x="1132" y="336" width="5" height="5" fill="#32c83a"/><rect x="1124" y="356" width="5" height="5" fill="#9ae614"/><rect x="1124" y="410" width="6" height="4" fill="#3adc2a"/><rect x="1170" y="329" width="4" height="4" fill="#9ae614"/><rect x="1168" y="426" width="5" height="4" fill="#32c83a"/><rect x="1162" y="324" width="6" height="5" fill="#52d238"/><rect x="1143" y="310" width="6" height="5" fill="#22b450"/><rect x="1176" y="360" width="4" height="4" fill="#f0e010"/><rect x="1122" y="374" width="5" height="5" fill="#9ae614"/><rect x="1122" y="402" width="5" height="5" fill="#52d238"/><rect x="1122" y="340" width="4" height="5" fill="#9ae614"/><rect x="1181" y="369" width="6" height="4" fill="#ff8a10"/><rect x="1144" y="320" width="5" height="5" fill="#52d238"/><rect x="1171" y="412" width="5" height="4" fill="#9ae614"/><rect x="1135" y="414" width="4" height="5" fill="#3adc2a"/><rect x="1124" y="397" width="4" height="4" fill="#32c83a"/><rect x="1128" y="413" width="5" height="4" fill="#52d238"/><rect x="1178" y="371" width="6" height="4" fill="#f0e010"/><rect x="1182" y="352" width="5" height="4" fill="#b8e818"/><rect x="1138" y="312" width="5" height="5" fill="#7ee61e"/><rect x="1182" y="356" width="5" height="5" fill="#e8e820"/><rect x="1131" y="326" width="4" height="5" fill="#52d238"/><rect x="1122" y="397" width="5" height="5" fill="#3adc2a"/><rect x="1179" y="364" width="4" height="5" fill="#ff8a10"/><rect x="1178" y="368" width="6" height="4" fill="#b8e818"/><rect x="1178" y="394" width="6" height="5" fill="#ff8a10"/><rect x="1128" y="338" width="4" height="4" fill="#22b450"/><rect x="1175" y="358" width="6" height="5" fill="#ff8a10"/><rect x="1141" y="428" width="5" height="4" fill="#3adc2a"/><rect x="1139" y="423" width="5" height="5" fill="#52d238"/><rect x="1156" y="322" width="6" height="4" fill="#32c83a"/><rect x="1140" y="421" width="4" height="5" fill="#7ee61e"/><rect x="1161" y="424" width="4" height="4" fill="#9ae614"/><rect x="1123" y="334" width="4" height="5" fill="#9ae614"/><rect x="1162" y="312" width="5" height="4" fill="#32c83a"/><rect x="1172" y="335" width="4" height="4" fill="#f0e010"/><rect x="1137" y="429" width="4" height="5" fill="#52d238"/><rect x="1133" y="425" width="6" height="5" fill="#32c83a"/><rect x="1125" y="342" width="5" height="5" fill="#52d238"/><rect x="1134" y="418" width="6" height="5" fill="#22b450"/><rect x="1178" y="384" width="5" height="5" fill="#f0e010"/><rect x="1119" y="349" width="4" height="4" fill="#9ae614"/><rect x="1149" y="309" width="6" height="5" fill="#9ae614"/><rect x="1119" y="355" width="6" height="5" fill="#32c83a"/><rect x="1170" y="409" width="4" height="5" fill="#b8e818"/><rect x="1127" y="349" width="4" height="4" fill="#9ae614"/><rect x="1122" y="371" width="6" height="5" fill="#32c83a"/><rect x="1181" y="393" width="4" height="5" fill="#ff8a10"/><rect x="1179" y="362" width="4" height="4" fill="#ff8a10"/><rect x="1174" y="416" width="4" height="4" fill="#32c83a"/><rect x="1159" y="310" width="4" height="5" fill="#3adc2a"/><rect x="1128" y="326" width="5" height="4" fill="#32c83a"/><rect x="1147" y="429" width="4" height="5" fill="#22b450"/><rect x="1136" y="428" width="4" height="4" fill="#32c83a"/><rect x="1169" y="408" width="6" height="5" fill="#f0e010"/><rect x="1139" y="422" width="5" height="5" fill="#7ee61e"/><rect x="1126" y="343" width="5" height="5" fill="#3adc2a"/><rect x="1171" y="413" width="6" height="5" fill="#9ae614"/><rect x="1158" y="316" width="5" height="5" fill="#32c83a"/><rect x="1125" y="334" width="6" height="4" fill="#22b450"/><rect x="1129" y="333" width="6" height="5" fill="#7ee61e"/><rect x="1152" y="318" width="5" height="5" fill="#9ae614"/><rect x="1177" y="378" width="4" height="5" fill="#b8e818"/><rect x="1154" y="423" width="5" height="5" fill="#32c83a"/><rect x="1179" y="361" width="5" height="4" fill="#f0e010"/><rect x="1179" y="349" width="6" height="4" fill="#e8e820"/><rect x="1147" y="314" width="6" height="4" fill="#32c83a"/><rect x="1123" y="381" width="4" height="4" fill="#22b450"/><rect x="1122" y="348" width="4" height="4" fill="#22b450"/><rect x="1163" y="375" width="5" height="6" fill="#ff1a1a"/><rect x="1166" y="368" width="4" height="4" fill="#e020e0"/></g><g stroke="#ffff00" stroke-width="1" fill="none"><line x1="383" y1="309" x2="1461" y2="478"/><line x1="465" y1="2" x2="1536" y2="171"/><line x1="830" y1="209" x2="1652" y2="338"/><line x1="500" y1="476" x2="1578" y2="645"/><line x1="383" y1="309" x2="458" y2="2"/><line x1="458" y1="2" x2="541" y2="121"/><line x1="574" y1="169" x2="500" y2="476" opacity="0.35"/><line x1="511" y1="430" x2="500" y2="476"/><line x1="500" y1="476" x2="383" y2="309"/><line x1="1461" y1="478" x2="1536" y2="171"/><line x1="1536" y1="171" x2="1652" y2="338"/><line x1="1652" y1="338" x2="1578" y2="645"/><line x1="1578" y1="645" x2="1461" y2="478"/></g><path d="M1372 252 L1267 316" stroke="#7fa4b8" stroke-width="4" opacity="0.55"/></svg>
<div class="a" style="left:1049px;top:474px;width:21px;height:1px;background:#d8d8d8;"></div>
<div class="a" style="left:1059px;top:464px;width:1px;height:21px;background:#d8d8d8;"></div>
<div class="a" style="left:1371px;top:169px;width:238px;height:85px;background:rgba(212,226,235,0.82);"></div>
<div class="t" style="left:1375.5px;top:172.30px;font-size:12.7px;line-height:14.6px;color:#000;letter-spacing:0px">C2M signed distances = 0.610906</div>
<div class="a" style="left:1376px;top:190px;width:18px;height:20px;background:#ff0000;"></div>
<div class="t" style="left:1379.5px;top:193.00px;font-size:12.7px;line-height:14.6px;color:#fff;">X</div>
<div class="t" style="left:1398px;top:192.9px;width:60px;text-align:right;font-size:12.7px;line-height:14.6px">5.634309</div>
<div class="a" style="left:1464px;top:190px;width:24px;height:20px;background:#ff0000;"></div>
<div class="t" style="left:1465.5px;top:193.00px;font-size:12.7px;line-height:14.6px;color:#fff;">Nx</div>
<div class="t" style="left:1489px;top:192.9px;width:61px;text-align:right;font-size:12.7px;line-height:14.6px">0.266837</div>
<div class="a" style="left:1556px;top:190px;width:18px;height:20px;background:#ff0000;"></div>
<div class="t" style="left:1559px;top:193.00px;font-size:12.7px;line-height:14.6px;color:#fff;">R</div>
<div class="t" style="left:1570px;top:192.9px;width:29.5px;text-align:right;font-size:12.7px;line-height:14.6px">255</div>
<div class="a" style="left:1376px;top:210px;width:18px;height:20px;background:#00c000;"></div>
<div class="t" style="left:1379.5px;top:213.00px;font-size:12.7px;line-height:14.6px;color:#fff;">Y</div>
<div class="t" style="left:1398px;top:212.9px;width:60px;text-align:right;font-size:12.7px;line-height:14.6px">3.635911</div>
<div class="a" style="left:1464px;top:210px;width:24px;height:20px;background:#00c000;"></div>
<div class="t" style="left:1465.5px;top:213.00px;font-size:12.7px;line-height:14.6px;color:#fff;">Ny</div>
<div class="t" style="left:1489px;top:212.9px;width:61px;text-align:right;font-size:12.7px;line-height:14.6px">-0.124874</div>
<div class="a" style="left:1556px;top:210px;width:18px;height:20px;background:#00c000;"></div>
<div class="t" style="left:1559px;top:213.00px;font-size:12.7px;line-height:14.6px;color:#fff;">G</div>
<div class="t" style="left:1570px;top:212.9px;width:29.5px;text-align:right;font-size:12.7px;line-height:14.6px">255</div>
<div class="a" style="left:1376px;top:230px;width:18px;height:20px;background:#0000ff;"></div>
<div class="t" style="left:1379.5px;top:233.00px;font-size:12.7px;line-height:14.6px;color:#fff;">Z</div>
<div class="t" style="left:1398px;top:232.9px;width:60px;text-align:right;font-size:12.7px;line-height:14.6px">12.057582</div>
<div class="a" style="left:1464px;top:230px;width:24px;height:20px;background:#0000ff;"></div>
<div class="t" style="left:1465.5px;top:233.00px;font-size:12.7px;line-height:14.6px;color:#fff;">Nz</div>
<div class="t" style="left:1489px;top:232.9px;width:61px;text-align:right;font-size:12.7px;line-height:14.6px">0.955617</div>
<div class="a" style="left:1556px;top:230px;width:18px;height:20px;background:#0000ff;"></div>
<div class="t" style="left:1559px;top:233.00px;font-size:12.7px;line-height:14.6px;color:#fff;">B</div>
<div class="t" style="left:1570px;top:232.9px;width:29.5px;text-align:right;font-size:12.7px;line-height:14.6px">0</div>
<div class="t" style="left:1679px;top:115.98px;font-size:16.3px;line-height:18.75px;color:#fff;">C2M signed distances</div>
<div class="a" style="left:1747px;top:143px;width:54px;height:611px;background:#fff;"></div>
<div class="a" style="left:1749px;top:145px;width:50px;height:607px;background:linear-gradient(#ff0000 0%, #ffff00 33.33%, #00ff00 66.67%, #0000ff 100%);"></div>
<div class="a" style="left:1742px;top:145px;width:5px;height:1px;background:#fff;"></div>
<div class="t" style="left:1600px;top:143.5px;width:139.5px;text-align:right;font-size:16px;line-height:18px;color:#fff">0.665943</div>
<div class="a" style="left:1742px;top:221px;width:5px;height:1px;background:#fff;"></div>
<div class="t" style="left:1600px;top:212.9px;width:139.5px;text-align:right;font-size:16px;line-height:18px;color:#fff">0.575256</div>
<div class="a" style="left:1742px;top:297px;width:5px;height:1px;background:#fff;"></div>
<div class="t" style="left:1600px;top:288.8px;width:139.5px;text-align:right;font-size:16px;line-height:18px;color:#fff">0.484569</div>
<div class="a" style="left:1742px;top:373px;width:5px;height:1px;background:#fff;"></div>
<div class="t" style="left:1600px;top:364.7px;width:139.5px;text-align:right;font-size:16px;line-height:18px;color:#fff">0.393882</div>
<div class="a" style="left:1742px;top:449px;width:5px;height:1px;background:#fff;"></div>
<div class="t" style="left:1600px;top:440.6px;width:139.5px;text-align:right;font-size:16px;line-height:18px;color:#fff">0.303195</div>
<div class="a" style="left:1742px;top:525px;width:5px;height:1px;background:#fff;"></div>
<div class="t" style="left:1600px;top:516.5px;width:139.5px;text-align:right;font-size:16px;line-height:18px;color:#fff">0.212508</div>
<div class="a" style="left:1742px;top:600px;width:5px;height:1px;background:#fff;"></div>
<div class="t" style="left:1600px;top:592.4px;width:139.5px;text-align:right;font-size:16px;line-height:18px;color:#fff">0.121821</div>
<div class="a" style="left:1742px;top:676px;width:5px;height:1px;background:#fff;"></div>
<div class="t" style="left:1600px;top:668.3px;width:139.5px;text-align:right;font-size:16px;line-height:18px;color:#fff">0.031134</div>
<div class="a" style="left:1742px;top:752px;width:5px;height:1px;background:#fff;"></div>
<div class="t" style="left:1600px;top:737.5px;width:139.5px;text-align:right;font-size:16px;line-height:18px;color:#fff">-0.059553</div>
<svg class="a" style="left:1790px;top:130px" width="55" height="640" viewBox="1790 130 55 640"><defs><linearGradient id="hl" x1="0" y1="0" x2="0" y2="1"><stop offset="0" stop-color="#ff0000"/><stop offset=".3333" stop-color="#ffff00"/><stop offset=".6667" stop-color="#00ff00"/><stop offset="1" stop-color="#0000ff"/></linearGradient><linearGradient id="hb" gradientUnits="userSpaceOnUse" x1="0" y1="144" x2="0" y2="753"><stop offset="0" stop-color="#ff0000"/><stop offset=".3333" stop-color="#ffff00"/><stop offset=".6667" stop-color="#00ff00"/><stop offset="1" stop-color="#0000ff"/></linearGradient></defs><line x1="1805.5" y1="144" x2="1805.5" y2="753" stroke="url(#hb)" stroke-width="1"/><path d="M1805.0 753.0 L1806.5 740.0 L1808.0 727.0 L1810.5 716.0 L1815.0 712.0 L1821.0 707.0 L1828.5 701.0 L1829.0 695.0 L1826.0 690.0 L1820.0 685.0 L1814.5 680.0 L1811.0 673.0 L1808.5 665.0 L1806.5 655.0 L1805.5 644.0 L1805.0 640.0Z" fill="url(#hb)"/></svg>
<div class="a" style="left:1407px;top:809px;width:342px;height:1px;background:#fff;"></div>
<div class="a" style="left:1407px;top:806px;width:1px;height:7px;background:#fff;"></div>
<div class="a" style="left:1748px;top:806px;width:1px;height:7px;background:#fff;"></div>
<div class="t" style="left:1573.5px;top:819.76px;font-size:16px;line-height:18.4px;color:#fff;">3</div>
<svg class="a" style="left:1760px;top:760px" width="70" height="70" viewBox="1760 760 70 70"><line x1="1797" y1="809" x2="1803" y2="786" stroke="#ff1010" stroke-width="2.5"/><line x1="1797" y1="809" x2="1773" y2="805" stroke="#20b8f0" stroke-width="2.5"/><line x1="1797" y1="809" x2="1803" y2="818" stroke="#10e010" stroke-width="2.5"/></svg>
<div class="t" style="left:1799px;top:765.68px;font-size:15px;line-height:17.25px;color:#ff1010;">X</div>
<div class="t" style="left:1759px;top:792.68px;font-size:15px;line-height:17.25px;color:#20b0f0;">Z</div>
<div class="t" style="left:1803px;top:813.18px;font-size:15px;line-height:17.25px;color:#10e010;">Y</div>
<div class="a" style="left:299px;top:454px;width:507px;height:399px;background:#ffffff;border:1px solid #c8c8c8;border-radius:8px;box-shadow:0 0 4px rgba(0,0,0,0.25)"></div>
<div class="a" style="left:300px;top:455px;width:505px;height:36px;background:#f3f3f3;border-radius:7px 7px 0 0"></div>
<svg class="a" style="left:309px;top:465px;" width="18" height="14" viewBox="0 0 18 14"><g fill="none" stroke="#2f7ab4" stroke-width="2.2"><path d="M10.4 2.6 A5.6 5.6 0 1 0 10.4 11.4"/><path d="M14.6 3.9 A4.4 4.4 0 1 0 14.6 10.1"/></g></svg>
<div class="t" style="left:333.5px;top:464.50px;font-size:14px;line-height:16.1px;color:#9a9a9a;letter-spacing:0.6px">[Distribution fitting]</div>
<div class="a" style="left:653px;top:472px;width:12px;height:1px;background:#dadada;"></div>
<div class="a" style="left:711px;top:466px;width:12px;height:12px;background:transparent;border:1.2px solid #555;border-radius:2px"></div>
<svg class="a" style="left:770px;top:466px;" width="12" height="12" viewBox="0 0 12 12"><path d="M0.5 0.5 L11.5 11.5 M11.5 0.5 L0.5 11.5" stroke="#707070" stroke-width="1"/></svg>
<div class="t" style="left:317.5px;top:494.26px;font-size:16px;line-height:18.4px;color:#000;letter-spacing:0.19px">Gauss: mean = 0.022998 / std.dev. = 0.053070 [51 classes]</div>
<div class="a" style="left:774px;top:498px;width:25px;height:24px;background:#f7f7f7;border:1px solid #d4d4d4;border-radius:4px"></div>
<div class="a" style="left:774px;top:532px;width:25px;height:24px;background:#f7f7f7;border:1px solid #d4d4d4;border-radius:4px"></div>
<svg class="a" style="left:777px;top:501px;" width="18" height="18" viewBox="0 0 18 18"><path d="M4 2 H12 L15 5 V17 H4Z" fill="#e8eef8" stroke="#5a7ac0"/><rect x="1" y="3.5" width="12" height="6" fill="#10b010"/><text x="1.5" y="9" font-size="5.5" font-weight="bold" fill="#fff" font-family="Liberation Mono">CSV</text><path d="M6 12 H13 M6 14 H13" stroke="#7a9ad0"/></svg>
<svg class="a" style="left:779px;top:536px;" width="15" height="16" viewBox="0 0 15 16"><rect x="1" y="1" width="13" height="14" fill="#fff" stroke="#6a7a9a"/><path d="M4 12 L11 4" stroke="#2255aa" stroke-width="2"/><path d="M3 13 L5 10 L6 12Z" fill="#d83"/></svg>
<svg class="a" style="left:299px;top:491px" width="507" height="360" viewBox="299 491 507 360"><line x1="449.9" y1="533" x2="449.9" y2="805" stroke="#b8b8b8" stroke-width="1" stroke-dasharray="1.5 2.5"/><line x1="503.2" y1="533" x2="503.2" y2="805" stroke="#b8b8b8" stroke-width="1" stroke-dasharray="1.5 2.5"/><line x1="556.5" y1="533" x2="556.5" y2="805" stroke="#b8b8b8" stroke-width="1" stroke-dasharray="1.5 2.5"/><line x1="609.8" y1="533" x2="609.8" y2="805" stroke="#b8b8b8" stroke-width="1" stroke-dasharray="1.5 2.5"/><line x1="663.1" y1="533" x2="663.1" y2="805" stroke="#b8b8b8" stroke-width="1" stroke-dasharray="1.5 2.5"/><line x1="716.4" y1="533" x2="716.4" y2="805" stroke="#b8b8b8" stroke-width="1" stroke-dasharray="1.5 2.5"/><line x1="366" y1="767.0" x2="751" y2="767.0" stroke="#b8b8b8" stroke-width="1" stroke-dasharray="1.5 2.5"/><line x1="366" y1="729.0" x2="751" y2="729.0" stroke="#b8b8b8" stroke-width="1" stroke-dasharray="1.5 2.5"/><line x1="366" y1="691.0" x2="751" y2="691.0" stroke="#b8b8b8" stroke-width="1" stroke-dasharray="1.5 2.5"/><line x1="366" y1="653.0" x2="751" y2="653.0" stroke="#b8b8b8" stroke-width="1" stroke-dasharray="1.5 2.5"/><line x1="366" y1="615.0" x2="751" y2="615.0" stroke="#b8b8b8" stroke-width="1" stroke-dasharray="1.5 2.5"/><line x1="366" y1="577.0" x2="751" y2="577.0" stroke="#b8b8b8" stroke-width="1" stroke-dasharray="1.5 2.5"/><line x1="366" y1="539.0" x2="751" y2="539.0" stroke="#b8b8b8" stroke-width="1" stroke-dasharray="1.5 2.5"/><line x1="396.6" y1="533" x2="396.6" y2="805" stroke="#d8d8d8" stroke-width="1"/><rect x="365.75" y="798.9" width="8.38" height="6.1" fill="#0007f7" shape-rendering="crispEdges"/><rect x="373.33" y="778.4" width="8.38" height="26.6" fill="#0016e8" shape-rendering="crispEdges"/><rect x="380.91" y="754.5" width="8.38" height="50.5" fill="#0025d9" shape-rendering="crispEdges"/><rect x="388.50" y="729.4" width="8.38" height="75.6" fill="#0034ca" shape-rendering="crispEdges"/><rect x="396.08" y="548.1" width="8.38" height="256.9" fill="#0043bb" shape-rendering="crispEdges"/><rect x="403.66" y="533.0" width="8.38" height="272.0" fill="#0052ac" shape-rendering="crispEdges"/><rect x="411.24" y="684.5" width="8.38" height="120.5" fill="#00619d" shape-rendering="crispEdges"/><rect x="418.83" y="750.7" width="8.38" height="54.3" fill="#00708e" shape-rendering="crispEdges"/><rect x="426.41" y="772.7" width="8.38" height="32.3" fill="#007f7f" shape-rendering="crispEdges"/><rect x="433.99" y="787.1" width="8.38" height="17.9" fill="#008e70" shape-rendering="crispEdges"/><rect x="441.57" y="795.9" width="8.38" height="9.1" fill="#009d61" shape-rendering="crispEdges"/><rect x="449.15" y="799.7" width="8.38" height="5.3" fill="#00ac52" shape-rendering="crispEdges"/><rect x="456.74" y="800.8" width="8.38" height="4.2" fill="#00bb43" shape-rendering="crispEdges"/><rect x="464.32" y="801.2" width="8.38" height="3.8" fill="#00ca34" shape-rendering="crispEdges"/><rect x="471.90" y="802.3" width="8.38" height="2.7" fill="#00d925" shape-rendering="crispEdges"/><rect x="479.48" y="801.2" width="8.38" height="3.8" fill="#00e816" shape-rendering="crispEdges"/><rect x="487.06" y="803.5" width="8.38" height="1.5" fill="#00f707" shape-rendering="crispEdges"/><rect x="494.65" y="803.9" width="8.38" height="1.1" fill="#07ff00" shape-rendering="crispEdges"/><rect x="502.23" y="803.1" width="8.38" height="1.9" fill="#16ff00" shape-rendering="crispEdges"/><rect x="509.81" y="804.2" width="8.38" height="0.8" fill="#25ff00" shape-rendering="crispEdges"/><rect x="517.39" y="802.7" width="8.38" height="2.3" fill="#34ff00" shape-rendering="crispEdges"/><rect x="524.98" y="804.2" width="8.38" height="0.8" fill="#43ff00" shape-rendering="crispEdges"/><rect x="532.56" y="803.5" width="8.38" height="1.5" fill="#52ff00" shape-rendering="crispEdges"/><rect x="540.14" y="804.2" width="8.38" height="0.8" fill="#61ff00" shape-rendering="crispEdges"/><rect x="547.72" y="804.6" width="8.38" height="0.4" fill="#70ff00" shape-rendering="crispEdges"/><rect x="555.30" y="804.2" width="8.38" height="0.8" fill="#7fff00" shape-rendering="crispEdges"/><rect x="562.89" y="804.6" width="8.38" height="0.4" fill="#8eff00" shape-rendering="crispEdges"/><rect x="570.47" y="804.6" width="8.38" height="0.4" fill="#9dff00" shape-rendering="crispEdges"/><rect x="578.05" y="804.6" width="8.38" height="0.4" fill="#acff00" shape-rendering="crispEdges"/><rect x="585.63" y="804.6" width="8.38" height="0.4" fill="#bbff00" shape-rendering="crispEdges"/><rect x="593.21" y="804.6" width="8.38" height="0.4" fill="#caff00" shape-rendering="crispEdges"/><rect x="600.80" y="804.6" width="8.38" height="0.4" fill="#d9ff00" shape-rendering="crispEdges"/><rect x="608.38" y="804.6" width="8.38" height="0.4" fill="#e8ff00" shape-rendering="crispEdges"/><rect x="615.96" y="804.6" width="8.38" height="0.4" fill="#f7ff00" shape-rendering="crispEdges"/><rect x="623.54" y="804.6" width="8.38" height="0.4" fill="#fff700" shape-rendering="crispEdges"/><rect x="631.13" y="804.6" width="8.38" height="0.4" fill="#ffe800" shape-rendering="crispEdges"/><rect x="638.71" y="804.6" width="8.38" height="0.4" fill="#ffd900" shape-rendering="crispEdges"/><rect x="646.29" y="804.6" width="8.38" height="0.4" fill="#ffca00" shape-rendering="crispEdges"/><rect x="653.87" y="804.6" width="8.38" height="0.4" fill="#ffbb00" shape-rendering="crispEdges"/><rect x="669.04" y="804.6" width="8.38" height="0.4" fill="#ff9d00" shape-rendering="crispEdges"/><rect x="676.62" y="804.6" width="8.38" height="0.4" fill="#ff8e00" shape-rendering="crispEdges"/><rect x="684.20" y="804.6" width="8.38" height="0.4" fill="#ff7f00" shape-rendering="crispEdges"/><rect x="691.78" y="804.6" width="8.38" height="0.4" fill="#ff7000" shape-rendering="crispEdges"/><rect x="699.36" y="804.6" width="8.38" height="0.4" fill="#ff6100" shape-rendering="crispEdges"/><rect x="706.95" y="804.6" width="8.38" height="0.4" fill="#ff5200" shape-rendering="crispEdges"/><rect x="714.53" y="804.6" width="8.38" height="0.4" fill="#ff4300" shape-rendering="crispEdges"/><rect x="722.11" y="804.6" width="8.38" height="0.4" fill="#ff3400" shape-rendering="crispEdges"/><rect x="729.69" y="804.6" width="8.38" height="0.4" fill="#ff2500" shape-rendering="crispEdges"/><rect x="737.28" y="804.6" width="8.38" height="0.4" fill="#ff1600" shape-rendering="crispEdges"/><rect x="744.86" y="804.6" width="8.38" height="0.4" fill="#ff0700" shape-rendering="crispEdges"/><path d="M364.9 767.9 L372.4 752.6 L380.0 736.2 L387.6 720.8 L395.2 709.2 L402.8 703.5 L410.4 704.9 L417.9 713.2 L425.5 726.6 L433.1 742.7 L440.7 758.9 L448.3 773.3 L455.8 784.7 L463.4 792.9 L471.0 798.3 L478.6 801.5 L486.2 803.3 L493.8 804.3 L501.3 804.7 L508.9 804.9 L516.5 805.0 L524.1 805.0 L531.7 805.0 L539.2 805.0 L546.8 805.0 L554.4 805.0" fill="none" stroke="#808080" stroke-width="2"/><line x1="365.75" y1="532" x2="365.75" y2="806" stroke="#000" stroke-width="1.3"/><line x1="365" y1="805.5" x2="751" y2="805.5" stroke="#000" stroke-width="1.3"/><line x1="360" y1="805.0" x2="365.75" y2="805.0" stroke="#000" stroke-width="1.2"/><line x1="360" y1="767.0" x2="365.75" y2="767.0" stroke="#000" stroke-width="1.2"/><line x1="360" y1="729.0" x2="365.75" y2="729.0" stroke="#000" stroke-width="1.2"/><line x1="360" y1="691.0" x2="365.75" y2="691.0" stroke="#000" stroke-width="1.2"/><line x1="360" y1="653.0" x2="365.75" y2="653.0" stroke="#000" stroke-width="1.2"/><line x1="360" y1="615.0" x2="365.75" y2="615.0" stroke="#000" stroke-width="1.2"/><line x1="360" y1="577.0" x2="365.75" y2="577.0" stroke="#000" stroke-width="1.2"/><line x1="360" y1="539.0" x2="365.75" y2="539.0" stroke="#000" stroke-width="1.2"/><line x1="362.5" y1="797.4" x2="365.75" y2="797.4" stroke="#000" stroke-width="1"/><line x1="362.5" y1="789.8" x2="365.75" y2="789.8" stroke="#000" stroke-width="1"/><line x1="362.5" y1="782.2" x2="365.75" y2="782.2" stroke="#000" stroke-width="1"/><line x1="362.5" y1="774.6" x2="365.75" y2="774.6" stroke="#000" stroke-width="1"/><line x1="362.5" y1="759.4" x2="365.75" y2="759.4" stroke="#000" stroke-width="1"/><line x1="362.5" y1="751.8" x2="365.75" y2="751.8" stroke="#000" stroke-width="1"/><line x1="362.5" y1="744.2" x2="365.75" y2="744.2" stroke="#000" stroke-width="1"/><line x1="362.5" y1="736.6" x2="365.75" y2="736.6" stroke="#000" stroke-width="1"/><line x1="362.5" y1="721.4" x2="365.75" y2="721.4" stroke="#000" stroke-width="1"/><line x1="362.5" y1="713.8" x2="365.75" y2="713.8" stroke="#000" stroke-width="1"/><line x1="362.5" y1="706.2" x2="365.75" y2="706.2" stroke="#000" stroke-width="1"/><line x1="362.5" y1="698.6" x2="365.75" y2="698.6" stroke="#000" stroke-width="1"/><line x1="362.5" y1="683.4" x2="365.75" y2="683.4" stroke="#000" stroke-width="1"/><line x1="362.5" y1="675.8" x2="365.75" y2="675.8" stroke="#000" stroke-width="1"/><line x1="362.5" y1="668.2" x2="365.75" y2="668.2" stroke="#000" stroke-width="1"/><line x1="362.5" y1="660.6" x2="365.75" y2="660.6" stroke="#000" stroke-width="1"/><line x1="362.5" y1="645.4" x2="365.75" y2="645.4" stroke="#000" stroke-width="1"/><line x1="362.5" y1="637.8" x2="365.75" y2="637.8" stroke="#000" stroke-width="1"/><line x1="362.5" y1="630.2" x2="365.75" y2="630.2" stroke="#000" stroke-width="1"/><line x1="362.5" y1="622.6" x2="365.75" y2="622.6" stroke="#000" stroke-width="1"/><line x1="362.5" y1="607.4" x2="365.75" y2="607.4" stroke="#000" stroke-width="1"/><line x1="362.5" y1="599.8" x2="365.75" y2="599.8" stroke="#000" stroke-width="1"/><line x1="362.5" y1="592.2" x2="365.75" y2="592.2" stroke="#000" stroke-width="1"/><line x1="362.5" y1="584.6" x2="365.75" y2="584.6" stroke="#000" stroke-width="1"/><line x1="362.5" y1="569.4" x2="365.75" y2="569.4" stroke="#000" stroke-width="1"/><line x1="362.5" y1="561.8" x2="365.75" y2="561.8" stroke="#000" stroke-width="1"/><line x1="362.5" y1="554.2" x2="365.75" y2="554.2" stroke="#000" stroke-width="1"/><line x1="362.5" y1="546.6" x2="365.75" y2="546.6" stroke="#000" stroke-width="1"/><line x1="396.6" y1="805" x2="396.6" y2="811" stroke="#000" stroke-width="1.2"/><line x1="449.9" y1="805" x2="449.9" y2="811" stroke="#000" stroke-width="1.2"/><line x1="503.2" y1="805" x2="503.2" y2="811" stroke="#000" stroke-width="1.2"/><line x1="556.5" y1="805" x2="556.5" y2="811" stroke="#000" stroke-width="1.2"/><line x1="609.8" y1="805" x2="609.8" y2="811" stroke="#000" stroke-width="1.2"/><line x1="663.1" y1="805" x2="663.1" y2="811" stroke="#000" stroke-width="1.2"/><line x1="716.4" y1="805" x2="716.4" y2="811" stroke="#000" stroke-width="1.2"/><line x1="375.3" y1="805" x2="375.3" y2="809" stroke="#000" stroke-width="1"/><line x1="385.9" y1="805" x2="385.9" y2="809" stroke="#000" stroke-width="1"/><line x1="407.3" y1="805" x2="407.3" y2="809" stroke="#000" stroke-width="1"/><line x1="417.9" y1="805" x2="417.9" y2="809" stroke="#000" stroke-width="1"/><line x1="428.6" y1="805" x2="428.6" y2="809" stroke="#000" stroke-width="1"/><line x1="439.2" y1="805" x2="439.2" y2="809" stroke="#000" stroke-width="1"/><line x1="460.6" y1="805" x2="460.6" y2="809" stroke="#000" stroke-width="1"/><line x1="471.2" y1="805" x2="471.2" y2="809" stroke="#000" stroke-width="1"/><line x1="481.9" y1="805" x2="481.9" y2="809" stroke="#000" stroke-width="1"/><line x1="492.5" y1="805" x2="492.5" y2="809" stroke="#000" stroke-width="1"/><line x1="513.9" y1="805" x2="513.9" y2="809" stroke="#000" stroke-width="1"/><line x1="524.5" y1="805" x2="524.5" y2="809" stroke="#000" stroke-width="1"/><line x1="535.2" y1="805" x2="535.2" y2="809" stroke="#000" stroke-width="1"/><line x1="545.8" y1="805" x2="545.8" y2="809" stroke="#000" stroke-width="1"/><line x1="567.2" y1="805" x2="567.2" y2="809" stroke="#000" stroke-width="1"/><line x1="577.8" y1="805" x2="577.8" y2="809" stroke="#000" stroke-width="1"/><line x1="588.5" y1="805" x2="588.5" y2="809" stroke="#000" stroke-width="1"/><line x1="599.1" y1="805" x2="599.1" y2="809" stroke="#000" stroke-width="1"/><line x1="620.5" y1="805" x2="620.5" y2="809" stroke="#000" stroke-width="1"/><line x1="631.1" y1="805" x2="631.1" y2="809" stroke="#000" stroke-width="1"/><line x1="641.8" y1="805" x2="641.8" y2="809" stroke="#000" stroke-width="1"/><line x1="652.4" y1="805" x2="652.4" y2="809" stroke="#000" stroke-width="1"/><line x1="673.8" y1="805" x2="673.8" y2="809" stroke="#000" stroke-width="1"/><line x1="684.4" y1="805" x2="684.4" y2="809" stroke="#000" stroke-width="1"/><line x1="695.1" y1="805" x2="695.1" y2="809" stroke="#000" stroke-width="1"/><line x1="705.7" y1="805" x2="705.7" y2="809" stroke="#000" stroke-width="1"/><line x1="727.1" y1="805" x2="727.1" y2="809" stroke="#000" stroke-width="1"/><line x1="737.7" y1="805" x2="737.7" y2="809" stroke="#000" stroke-width="1"/><line x1="748.4" y1="805" x2="748.4" y2="809" stroke="#000" stroke-width="1"/></svg>
<div class="t" style="left:300px;top:797.5px;width:55px;text-align:right;font-size:12px;line-height:14px">0</div>
<div class="t" style="left:300px;top:759.5px;width:55px;text-align:right;font-size:12px;line-height:14px">100</div>
<div class="t" style="left:300px;top:721.5px;width:55px;text-align:right;font-size:12px;line-height:14px">200</div>
<div class="t" style="left:300px;top:683.5px;width:55px;text-align:right;font-size:12px;line-height:14px">300</div>
<div class="t" style="left:300px;top:645.5px;width:55px;text-align:right;font-size:12px;line-height:14px">400</div>
<div class="t" style="left:300px;top:607.5px;width:55px;text-align:right;font-size:12px;line-height:14px">500</div>
<div class="t" style="left:300px;top:569.5px;width:55px;text-align:right;font-size:12px;line-height:14px">600</div>
<div class="t" style="left:300px;top:531.5px;width:55px;text-align:right;font-size:12px;line-height:14px">700</div>
<div class="t" style="left:376.6px;top:814.5px;width:40px;text-align:center;font-size:12px;line-height:14px">0</div>
<div class="t" style="left:429.9px;top:814.5px;width:40px;text-align:center;font-size:12px;line-height:14px">0.1</div>
<div class="t" style="left:483.2px;top:814.5px;width:40px;text-align:center;font-size:12px;line-height:14px">0.2</div>
<div class="t" style="left:536.5px;top:814.5px;width:40px;text-align:center;font-size:12px;line-height:14px">0.3</div>
<div class="t" style="left:589.8px;top:814.5px;width:40px;text-align:center;font-size:12px;line-height:14px">0.4</div>
<div class="t" style="left:643.1px;top:814.5px;width:40px;text-align:center;font-size:12px;line-height:14px">0.5</div>
<div class="t" style="left:696.4px;top:814.5px;width:40px;text-align:center;font-size:12px;line-height:14px">0.6</div>
<div class="t" style="left:458px;top:832.7px;width:200px;text-align:center;font-size:12.5px;line-height:14.5px">C2M signed distances</div>
<div class="t" style="left:296px;top:662px;width:40px;text-align:center;font-size:12.5px;line-height:14px;transform:rotate(-90deg)">Count</div>
</body></html>
